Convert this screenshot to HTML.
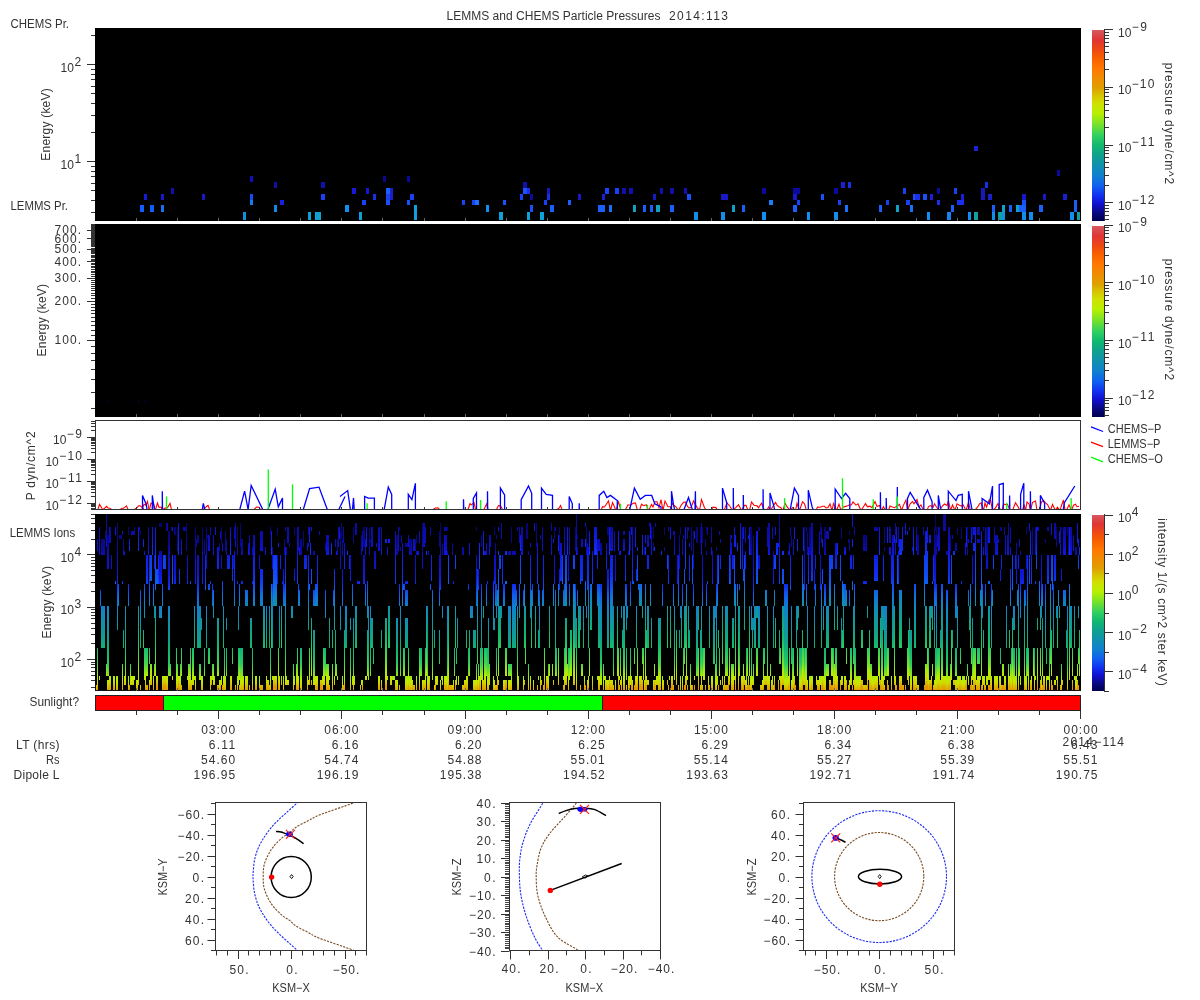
<!DOCTYPE html>
<html><head><meta charset="utf-8"><style>
html,body{margin:0;padding:0;background:#fff;overflow:hidden;}
svg{display:block;will-change:transform;}
text{font-family:"Liberation Sans", sans-serif;}
</style></head><body>
<svg width="1200" height="1000" viewBox="0 0 1200 1000" shape-rendering="crispEdges">
<defs><linearGradient id="cmap" x1="0" y1="0" x2="0" y2="1"><stop offset="0" stop-color="#d55a5f"/><stop offset="0.053" stop-color="#e03535"/><stop offset="0.11" stop-color="#f04c10"/><stop offset="0.147" stop-color="#f86000"/><stop offset="0.2" stop-color="#ff7800"/><stop offset="0.25" stop-color="#f08c00"/><stop offset="0.305" stop-color="#e0a000"/><stop offset="0.34" stop-color="#d8c000"/><stop offset="0.384" stop-color="#d0e000"/><stop offset="0.437" stop-color="#b8f000"/><stop offset="0.5" stop-color="#70e030"/><stop offset="0.553" stop-color="#30d060"/><stop offset="0.605" stop-color="#10b870"/><stop offset="0.658" stop-color="#10a090"/><stop offset="0.71" stop-color="#1090b0"/><stop offset="0.763" stop-color="#1080d0"/><stop offset="0.816" stop-color="#1060f0"/><stop offset="0.868" stop-color="#1030f0"/><stop offset="0.91" stop-color="#1010d0"/><stop offset="0.958" stop-color="#080880"/><stop offset="1.0" stop-color="#000050"/></linearGradient></defs>
<rect width="1200" height="1000" fill="#fff"/>
<rect x="95" y="28" width="986" height="193" fill="#000"/>
<rect x="95" y="224" width="986" height="192.5" fill="#000"/>
<rect x="95" y="513.5" width="986" height="177.5" fill="#000"/>
<rect x="140" y="205" width="4" height="6.5" fill="#1060ff"/>
<rect x="144" y="193.5" width="3" height="6.0" fill="#1818d8"/>
<rect x="150" y="205" width="4" height="6.5" fill="#1060f8"/>
<rect x="161" y="193.5" width="3" height="6.0" fill="#1818d0"/>
<rect x="161" y="205" width="3" height="6.5" fill="#1a70f0"/>
<rect x="171" y="188" width="3" height="5.5" fill="#1010b0"/>
<rect x="202" y="193.5" width="3" height="6.0" fill="#1818c8"/>
<rect x="243" y="211.5" width="3" height="8.0" fill="#1090e0"/>
<rect x="250" y="176" width="3" height="5.5" fill="#1010b8"/>
<rect x="250" y="193.5" width="3" height="6.0" fill="#1050f0"/>
<rect x="250" y="199.5" width="3" height="5.5" fill="#1080f0"/>
<rect x="274" y="182" width="3" height="5.5" fill="#1010a0"/>
<rect x="274" y="205" width="3" height="6.5" fill="#1088e8"/>
<rect x="280" y="199.5" width="4" height="5.5" fill="#1a20e0"/>
<rect x="308" y="211.5" width="3" height="8.0" fill="#10a0d8"/>
<rect x="315" y="211.5" width="6" height="8.0" fill="#10a0d0"/>
<rect x="321" y="182" width="4" height="5.5" fill="#1010b0"/>
<rect x="321" y="193.5" width="4" height="6.0" fill="#1a40f8"/>
<rect x="345" y="205" width="4" height="6.5" fill="#1090f0"/>
<rect x="352" y="188" width="4" height="5.5" fill="#1818d8"/>
<rect x="359" y="211.5" width="3" height="8.0" fill="#10a0d8"/>
<rect x="362" y="199.5" width="4" height="5.5" fill="#1a40f8"/>
<rect x="366" y="188" width="3" height="5.5" fill="#1818d0"/>
<rect x="373" y="193.5" width="3" height="6.0" fill="#1a30e8"/>
<rect x="383" y="176" width="3" height="5.5" fill="#080890"/>
<rect x="386" y="188" width="4" height="5.5" fill="#1a60ff"/>
<rect x="386" y="193.5" width="4" height="6.0" fill="#1a40f0"/>
<rect x="386" y="199.5" width="4" height="5.5" fill="#1a50f8"/>
<rect x="390" y="188" width="3" height="5.5" fill="#1a20c8"/>
<rect x="390" y="193.5" width="3" height="6.0" fill="#1a20c8"/>
<rect x="407" y="176" width="3" height="5.5" fill="#0a0a98"/>
<rect x="407" y="199.5" width="3" height="5.5" fill="#1a50f8"/>
<rect x="410" y="193.5" width="4" height="6.0" fill="#1a40f0"/>
<rect x="414" y="205" width="3" height="6.5" fill="#10a0e0"/>
<rect x="414" y="211.5" width="3" height="8.0" fill="#10a0e0"/>
<rect x="462" y="199.5" width="3" height="5.5" fill="#1a40f8"/>
<rect x="472" y="199.5" width="3" height="5.5" fill="#1a40f8"/>
<rect x="475" y="199.5" width="4" height="5.5" fill="#1a70f8"/>
<rect x="486" y="205" width="3" height="6.5" fill="#1090f0"/>
<rect x="499" y="211.5" width="4" height="8.0" fill="#10a0d8"/>
<rect x="503" y="199.5" width="3" height="5.5" fill="#1a50f8"/>
<rect x="520" y="193.5" width="3" height="6.0" fill="#1a40f0"/>
<rect x="523" y="182" width="4" height="5.5" fill="#1010b0"/>
<rect x="523" y="188" width="4" height="5.5" fill="#1a50ff"/>
<rect x="527" y="188" width="3" height="5.5" fill="#1a30e0"/>
<rect x="530" y="193.5" width="3" height="6.0" fill="#0a0aa0"/>
<rect x="530" y="205" width="3" height="6.5" fill="#1a50f8"/>
<rect x="527" y="211.5" width="3" height="8.0" fill="#10a0d8"/>
<rect x="540" y="211.5" width="4" height="8.0" fill="#10a0d8"/>
<rect x="544" y="199.5" width="3" height="5.5" fill="#1a40f8"/>
<rect x="547" y="188" width="3" height="5.5" fill="#1818c0"/>
<rect x="547" y="193.5" width="3" height="6.0" fill="#1a30e8"/>
<rect x="550" y="205" width="4" height="6.5" fill="#1a60f8"/>
<rect x="568" y="199.5" width="3" height="5.5" fill="#1a60f8"/>
<rect x="578" y="193.5" width="3" height="6.0" fill="#1818c8"/>
<rect x="598" y="205" width="7" height="6.5" fill="#1a60f8"/>
<rect x="602" y="193.5" width="3" height="6.0" fill="#1a20d0"/>
<rect x="605" y="188" width="4" height="5.5" fill="#1a40f8"/>
<rect x="609" y="205" width="3" height="6.5" fill="#1a70f8"/>
<rect x="615" y="188" width="4" height="5.5" fill="#1a40f8"/>
<rect x="622" y="188" width="4" height="5.5" fill="#1010a8"/>
<rect x="629" y="188" width="4" height="5.5" fill="#1010b0"/>
<rect x="633" y="205" width="3" height="6.5" fill="#10a0c0"/>
<rect x="643" y="205" width="3" height="6.5" fill="#1a60f8"/>
<rect x="650" y="205" width="3" height="6.5" fill="#1a60f8"/>
<rect x="653" y="193.5" width="3" height="6.0" fill="#1818c8"/>
<rect x="656" y="205" width="4" height="6.5" fill="#10a0c0"/>
<rect x="660" y="188" width="3" height="5.5" fill="#1010a8"/>
<rect x="670" y="188" width="4" height="5.5" fill="#1010a8"/>
<rect x="670" y="205" width="4" height="6.5" fill="#1a60f8"/>
<rect x="684" y="188" width="3" height="5.5" fill="#1010b0"/>
<rect x="687" y="193.5" width="4" height="6.0" fill="#1a50f8"/>
<rect x="694" y="211.5" width="4" height="8.0" fill="#1090e8"/>
<rect x="721" y="193.5" width="7" height="6.0" fill="#1818c8"/>
<rect x="721" y="211.5" width="4" height="8.0" fill="#1090e8"/>
<rect x="732" y="205" width="3" height="6.5" fill="#10a0c8"/>
<rect x="742" y="205" width="3" height="6.5" fill="#1a60f8"/>
<rect x="762" y="188" width="4" height="5.5" fill="#0a0aa0"/>
<rect x="762" y="211.5" width="4" height="8.0" fill="#1090f0"/>
<rect x="769" y="199.5" width="4" height="5.5" fill="#1a80f8"/>
<rect x="793" y="188" width="7" height="5.5" fill="#0a0aa0"/>
<rect x="793" y="193.5" width="4" height="6.0" fill="#1818c8"/>
<rect x="797" y="199.5" width="3" height="5.5" fill="#1a40f8"/>
<rect x="793" y="205" width="4" height="6.5" fill="#1a60f8"/>
<rect x="807" y="211.5" width="3" height="8.0" fill="#1090f0"/>
<rect x="821" y="193.5" width="3" height="6.0" fill="#1a50f8"/>
<rect x="834" y="188" width="4" height="5.5" fill="#0a0aa0"/>
<rect x="834" y="211.5" width="4" height="8.0" fill="#1090f0"/>
<rect x="838" y="199.5" width="3" height="5.5" fill="#1a40f0"/>
<rect x="841" y="182" width="4" height="5.5" fill="#1a20d8"/>
<rect x="845" y="205" width="3" height="6.5" fill="#1a70f8"/>
<rect x="848" y="182" width="3" height="5.5" fill="#1a30e8"/>
<rect x="879" y="205" width="3" height="6.5" fill="#1a60f8"/>
<rect x="886" y="199.5" width="3" height="5.5" fill="#1a40e8"/>
<rect x="896" y="205" width="3" height="6.5" fill="#10a0c0"/>
<rect x="903" y="188" width="3" height="5.5" fill="#1a40f0"/>
<rect x="906" y="199.5" width="4" height="5.5" fill="#1a40f0"/>
<rect x="910" y="205" width="3" height="6.5" fill="#1a70f8"/>
<rect x="913" y="193.5" width="3" height="6.0" fill="#1a50f8"/>
<rect x="916" y="193.5" width="4" height="6.0" fill="#1a30d8"/>
<rect x="923" y="193.5" width="4" height="6.0" fill="#1a50f8"/>
<rect x="927" y="211.5" width="3" height="8.0" fill="#1090f0"/>
<rect x="930" y="193.5" width="3" height="6.0" fill="#1a20d8"/>
<rect x="937" y="188" width="3" height="5.5" fill="#0a0aa0"/>
<rect x="937" y="199.5" width="3" height="5.5" fill="#1a30e8"/>
<rect x="947" y="211.5" width="4" height="8.0" fill="#1a80f0"/>
<rect x="951" y="205" width="3" height="6.5" fill="#1a60f8"/>
<rect x="954" y="188" width="3" height="5.5" fill="#1a40f0"/>
<rect x="957" y="199.5" width="7" height="5.5" fill="#1a30f0"/>
<rect x="961" y="193.5" width="3" height="6.0" fill="#1a20d8"/>
<rect x="968" y="211.5" width="3" height="8.0" fill="#1090f0"/>
<rect x="974" y="146" width="4" height="5" fill="#1a20d8"/>
<rect x="974" y="211.5" width="4" height="8.0" fill="#10a0a0"/>
<rect x="981" y="188" width="4" height="5.5" fill="#1818b8"/>
<rect x="981" y="193.5" width="4" height="6.0" fill="#1818c0"/>
<rect x="985" y="182" width="3" height="5.5" fill="#1a30e8"/>
<rect x="988" y="193.5" width="4" height="6.0" fill="#1a20c8"/>
<rect x="992" y="205" width="3" height="6.5" fill="#1a60f8"/>
<rect x="992" y="211.5" width="3" height="8.0" fill="#1090e8"/>
<rect x="998" y="211.5" width="4" height="8.0" fill="#10a0a0"/>
<rect x="1002" y="205" width="3" height="6.5" fill="#10a0d0"/>
<rect x="1002" y="211.5" width="3" height="8.0" fill="#1090e0"/>
<rect x="1009" y="205" width="3" height="6.5" fill="#1a60f8"/>
<rect x="1016" y="205" width="3" height="6.5" fill="#10a0c0"/>
<rect x="1019" y="205" width="3" height="6.5" fill="#1a60f8"/>
<rect x="1022" y="193.5" width="4" height="6.0" fill="#1818c8"/>
<rect x="1022" y="199.5" width="4" height="5.5" fill="#1a50f8"/>
<rect x="1022" y="205" width="4" height="6.5" fill="#1a60f8"/>
<rect x="1022" y="211.5" width="4" height="8.0" fill="#1090e8"/>
<rect x="1029" y="211.5" width="4" height="8.0" fill="#1090e8"/>
<rect x="1039" y="205" width="4" height="6.5" fill="#1a60f8"/>
<rect x="1043" y="193.5" width="3" height="6.0" fill="#1818c8"/>
<rect x="1057" y="170" width="3" height="5.5" fill="#0a0aa0"/>
<rect x="1063" y="193.5" width="4" height="6.0" fill="#1a20d0"/>
<rect x="1070" y="211.5" width="4" height="8.0" fill="#1090e8"/>
<rect x="1074" y="199.5" width="3" height="5.5" fill="#1a60f8"/>
<rect x="1074" y="205" width="3" height="6.5" fill="#1a60f8"/>
<rect x="1077" y="211.5" width="3" height="8.0" fill="#10a0a0"/>
<rect x="915" y="193.5" width="5" height="6.0" fill="#1a30e8"/>
<rect x="107" y="400.5" width="1" height="1.2" fill="#101090"/>
<rect x="138" y="400.5" width="1" height="1.2" fill="#101090"/>
<rect x="145" y="400.5" width="1" height="1.2" fill="#101090"/>
<defs><linearGradient id="g4v0" gradientUnits="userSpaceOnUse" x1="0" y1="514" x2="0" y2="690.5"><stop offset="0.000" stop-color="#1010d0"/><stop offset="0.074" stop-color="#1013d3"/><stop offset="0.147" stop-color="#101fdf"/><stop offset="0.210" stop-color="#102eee"/><stop offset="0.261" stop-color="#1040f0"/><stop offset="0.346" stop-color="#104ef0"/><stop offset="0.397" stop-color="#1063ec"/><stop offset="0.459" stop-color="#1082cb"/><stop offset="0.521" stop-color="#1093a9"/><stop offset="0.589" stop-color="#10a18e"/><stop offset="0.657" stop-color="#10b179"/><stop offset="0.714" stop-color="#19be6b"/><stop offset="0.759" stop-color="#2ecf60"/><stop offset="0.805" stop-color="#51d846"/><stop offset="0.850" stop-color="#75e12c"/><stop offset="0.884" stop-color="#a9ec09"/><stop offset="0.918" stop-color="#c6e600"/><stop offset="0.941" stop-color="#d3d200"/><stop offset="0.958" stop-color="#d9bb00"/><stop offset="0.975" stop-color="#e29c00"/><stop offset="1.000" stop-color="#f18a00"/></linearGradient><clipPath id="c4v0"><path d="M115 527h1V535h-1zM115 581h1V584h-1zM129 539h1V551h-1zM129 685h1V690.5h-1zM138 527h1V551h-1zM138 606h1V685h-1zM143 539h1V547h-1zM143 630h1V648h-1zM150 555h2V581h-2zM150 664h2V685h-2zM152 527h1V555h-1zM155 527h1V590h-1zM155 606h1V676h-1zM156 569h2V584h-2zM156 676h2V690.5h-2zM163 555h3V569h-3zM163 676h3V690.5h-3zM172 527h1V531h-1zM172 555h1V584h-1zM172 676h1V680h-1zM178 523h1V555h-1zM178 676h1V690.5h-1zM211 676h1V685h-1zM215 527h1V535h-1zM230 527h1V555h-1zM230 676h1V690.5h-1zM271 531h1V555h-1zM271 584h1V648h-1zM273 555h4V606h-4zM273 676h4V690.5h-4zM278 543h1V547h-1zM278 648h1V690.5h-1zM281 606h1V648h-1zM281 676h1V685h-1zM309 527h1V543h-1zM309 584h1V590h-1zM309 648h1V685h-1zM310 543h1V555h-1zM311 527h1V531h-1zM311 569h1V584h-1zM311 618h1V676h-1zM311 680h1V685h-1zM320 680h2V690.5h-2zM331 543h1V555h-1zM339 527h1V539h-1zM347 551h1V555h-1zM366 527h1V547h-1zM366 676h1V680h-1zM385 539h2V543h-2zM385 618h2V690.5h-2zM388 539h2V543h-2zM388 606h2V648h-2zM426 551h1V555h-1zM426 606h1V676h-1zM429 676h1V690.5h-1zM448 555h1V584h-1zM448 606h1V690.5h-1zM455 555h1V569h-1zM455 606h1V648h-1zM455 680h1V690.5h-1zM479 543h1V569h-1zM479 676h1V690.5h-1zM483 531h1V555h-1zM483 606h1V618h-1zM483 680h1V690.5h-1zM497 590h1V606h-1zM497 676h1V690.5h-1zM498 527h1V531h-1zM498 551h1V555h-1zM498 569h1V676h-1zM498 680h1V685h-1zM499 555h2V569h-2zM499 606h2V648h-2zM505 551h2V555h-2zM505 581h2V584h-2zM505 648h2V676h-2zM505 680h2V690.5h-2zM520 535h1V551h-1zM520 555h1V584h-1zM524 584h1V648h-1zM524 680h1V685h-1zM525 606h1V664h-1zM531 590h1V648h-1zM534 523h1V531h-1zM535 606h1V648h-1zM541 680h1V685h-1zM544 648h1V690.5h-1zM546 676h2V690.5h-2zM549 606h1V648h-1zM549 664h1V676h-1zM552 664h1V676h-1zM553 539h1V543h-1zM553 584h1V606h-1zM553 680h1V685h-1zM558 535h1V551h-1zM558 584h1V606h-1zM558 648h1V685h-1zM562 555h1V584h-1zM565 555h2V606h-2zM565 618h2V685h-2zM567 527h1V555h-1zM567 664h1V676h-1zM570 630h2V676h-2zM573 555h2V569h-2zM573 584h2V685h-2zM578 606h2V648h-2zM585 523h1V527h-1zM585 539h1V547h-1zM585 581h1V606h-1zM585 685h1V690.5h-1zM589 531h1V555h-1zM589 648h1V676h-1zM590 584h2V630h-2zM594 527h3V555h-3zM609 527h1V555h-1zM609 676h1V690.5h-1zM617 606h1V676h-1zM618 531h1V551h-1zM618 648h1V690.5h-1zM629 531h1V555h-1zM629 676h1V690.5h-1zM631 527h1V535h-1zM631 676h1V690.5h-1zM633 581h1V584h-1zM634 648h1V664h-1zM634 685h1V690.5h-1zM635 527h1V547h-1zM635 676h1V690.5h-1zM637 547h1V551h-1zM637 555h1V581h-1zM637 648h1V690.5h-1zM638 584h1V590h-1zM639 584h3V606h-3zM639 676h3V690.5h-3zM642 535h1V555h-1zM642 606h1V618h-1zM642 648h1V664h-1zM642 680h1V690.5h-1zM643 648h1V680h-1zM645 535h1V543h-1zM645 547h1V555h-1zM645 584h1V690.5h-1zM646 630h1V648h-1zM646 676h1V690.5h-1zM650 523h1V539h-1zM650 584h1V606h-1zM654 547h1V551h-1zM654 664h1V676h-1zM654 680h1V690.5h-1zM661 551h1V555h-1zM667 555h1V569h-1zM667 606h1V648h-1zM667 680h1V685h-1zM670 527h1V539h-1zM670 606h1V648h-1zM671 676h2V690.5h-2zM676 630h1V685h-1zM684 569h1V584h-1zM684 606h1V664h-1zM684 685h1V690.5h-1zM685 527h1V569h-1zM685 606h1V648h-1zM685 676h1V690.5h-1zM686 584h1V685h-1zM692 555h1V584h-1zM692 685h1V690.5h-1zM694 531h1V539h-1zM694 676h1V680h-1zM694 685h1V690.5h-1zM698 606h1V630h-1zM698 648h1V690.5h-1zM703 648h2V680h-2zM718 555h1V584h-1zM718 630h1V648h-1zM718 685h1V690.5h-1zM722 606h1V664h-1zM722 676h1V685h-1zM728 676h1V690.5h-1zM729 555h1V584h-1zM729 648h1V685h-1zM734 527h1V547h-1zM734 555h1V606h-1zM734 676h1V680h-1zM735 535h1V547h-1zM735 584h1V690.5h-1zM737 543h1V551h-1zM737 584h1V606h-1zM738 606h1V690.5h-1zM740 523h1V569h-1zM741 676h1V690.5h-1zM743 527h1V539h-1zM743 569h1V581h-1zM743 664h1V690.5h-1zM744 555h1V630h-1zM744 676h1V685h-1zM747 648h1V676h-1zM747 685h1V690.5h-1zM748 535h1V539h-1zM748 676h1V690.5h-1zM749 527h1V555h-1zM749 606h1V676h-1zM749 685h1V690.5h-1zM756 531h2V584h-2zM756 606h2V618h-2zM756 648h2V676h-2zM765 590h2V606h-2zM765 676h2V685h-2zM774 555h1V569h-1zM774 590h1V606h-1zM774 676h1V690.5h-1zM775 527h1V535h-1zM775 555h1V569h-1zM775 618h1V648h-1zM776 543h2V555h-2zM778 543h1V547h-1zM778 680h1V690.5h-1zM780 648h1V664h-1zM780 676h1V690.5h-1zM782 551h2V555h-2zM782 569h2V584h-2zM782 606h2V685h-2zM794 527h1V539h-1zM794 676h1V690.5h-1zM795 685h1V690.5h-1zM797 539h1V551h-1zM797 606h1V630h-1zM797 648h1V676h-1zM798 606h1V618h-1zM802 555h1V606h-1zM802 630h1V690.5h-1zM803 527h1V551h-1zM803 584h1V606h-1zM803 648h1V685h-1zM805 648h1V690.5h-1zM822 539h1V547h-1zM822 569h1V584h-1zM822 676h1V690.5h-1zM829 527h2V531h-2zM829 555h2V606h-2zM829 680h2V690.5h-2zM831 555h2V569h-2zM831 648h2V676h-2zM831 685h2V690.5h-2zM834 584h1V630h-1zM834 664h1V690.5h-1zM837 543h1V555h-1zM837 606h1V630h-1zM837 676h1V690.5h-1zM840 555h1V581h-1zM840 680h1V690.5h-1zM842 581h1V606h-1zM842 630h1V648h-1zM842 676h1V685h-1zM843 584h1V648h-1zM846 590h1V606h-1zM846 648h1V664h-1zM846 680h1V690.5h-1zM852 514h1V527h-1zM852 539h1V547h-1zM852 581h1V590h-1zM852 685h1V690.5h-1zM861 630h2V648h-2zM861 680h2V690.5h-2zM867 606h1V618h-1zM867 648h1V690.5h-1zM868 648h1V680h-1zM869 630h1V690.5h-1zM878 648h1V676h-1zM879 527h1V555h-1zM879 648h1V685h-1zM880 618h1V648h-1zM880 680h1V690.5h-1zM887 527h1V543h-1zM887 648h1V676h-1zM887 680h1V690.5h-1zM888 648h1V676h-1zM888 685h1V690.5h-1zM894 535h1V543h-1zM894 606h1V685h-1zM896 527h1V543h-1zM896 685h1V690.5h-1zM897 555h1V584h-1zM899 539h3V555h-3zM899 590h3V648h-3zM899 676h3V690.5h-3zM902 527h1V551h-1zM902 685h1V690.5h-1zM905 523h1V535h-1zM905 685h1V690.5h-1zM907 531h1V535h-1zM907 648h1V680h-1zM908 630h1V685h-1zM913 527h1V555h-1zM913 676h1V690.5h-1zM924 555h1V606h-1zM924 685h1V690.5h-1zM925 531h2V584h-2zM925 606h2V648h-2zM925 664h2V690.5h-2zM927 527h1V543h-1zM927 551h1V584h-1zM927 648h1V690.5h-1zM929 535h2V543h-2zM929 606h2V648h-2zM929 680h2V690.5h-2zM931 606h1V618h-1zM931 676h1V690.5h-1zM932 581h1V584h-1zM932 606h1V630h-1zM932 664h1V676h-1zM951 555h1V584h-1zM951 630h1V680h-1zM953 551h2V555h-2zM953 680h2V685h-2zM966 527h1V547h-1zM966 676h1V690.5h-1zM969 606h1V630h-1zM970 584h1V648h-1zM970 685h1V690.5h-1zM971 527h1V543h-1zM971 648h1V664h-1zM971 676h1V690.5h-1zM973 527h2V535h-2zM973 543h2V551h-2zM973 648h2V690.5h-2zM975 527h1V606h-1zM975 648h1V685h-1zM980 590h1V606h-1zM980 676h1V680h-1zM981 531h1V676h-1zM981 685h1V690.5h-1zM988 527h2V543h-2zM988 581h2V584h-2zM988 606h2V680h-2zM988 685h2V690.5h-2zM990 648h1V690.5h-1zM992 590h1V606h-1zM993 555h1V569h-1zM999 676h1V690.5h-1zM1002 664h2V676h-2zM1002 685h2V690.5h-2zM1009 630h1V648h-1zM1009 676h1V690.5h-1zM1012 555h1V590h-1zM1012 618h1V690.5h-1zM1017 590h1V606h-1zM1029 523h1V531h-1zM1029 555h1V584h-1zM1030 531h1V555h-1zM1030 680h1V690.5h-1zM1033 648h1V676h-1zM1036 527h1V569h-1zM1037 527h1V531h-1zM1037 618h1V630h-1zM1037 648h1V690.5h-1zM1039 581h1V606h-1zM1040 606h1V630h-1zM1040 648h1V676h-1zM1040 680h1V690.5h-1zM1043 676h2V690.5h-2zM1050 584h1V664h-1zM1051 523h1V535h-1zM1051 555h1V581h-1zM1051 630h1V676h-1zM1051 680h1V690.5h-1zM1052 555h1V590h-1zM1052 685h1V690.5h-1zM1057 606h1V648h-1zM1057 676h1V690.5h-1zM1058 590h1V606h-1zM1059 531h1V543h-1zM1059 606h1V618h-1zM1062 680h1V685h-1zM1069 527h1V555h-1zM1069 584h1V680h-1zM1072 648h1V676h-1zM1072 680h1V690.5h-1zM1077 523h1V543h-1zM1077 664h1V676h-1zM1077 680h1V690.5h-1zM1078 539h1V547h-1zM1078 555h1V569h-1zM1078 606h1V618h-1zM1078 648h1V664h-1zM1078 685h1V690.5h-1zM1079 547h1V555h-1zM1079 630h1V676h-1z"/></clipPath><linearGradient id="g4v1" gradientUnits="userSpaceOnUse" x1="0" y1="514" x2="0" y2="690.5"><stop offset="0.000" stop-color="#0a0a95"/><stop offset="0.074" stop-color="#0b0b9e"/><stop offset="0.147" stop-color="#0d0db6"/><stop offset="0.210" stop-color="#1013d3"/><stop offset="0.261" stop-color="#1023e3"/><stop offset="0.346" stop-color="#102eee"/><stop offset="0.397" stop-color="#1045f0"/><stop offset="0.459" stop-color="#106fe0"/><stop offset="0.521" stop-color="#1088bf"/><stop offset="0.589" stop-color="#1096a3"/><stop offset="0.657" stop-color="#10a18e"/><stop offset="0.714" stop-color="#10ae7c"/><stop offset="0.759" stop-color="#19be6b"/><stop offset="0.805" stop-color="#2bcc62"/><stop offset="0.850" stop-color="#4bd64b"/><stop offset="0.884" stop-color="#81e324"/><stop offset="0.918" stop-color="#b4ef02"/><stop offset="0.941" stop-color="#c8e400"/><stop offset="0.958" stop-color="#d2d500"/><stop offset="0.975" stop-color="#dab600"/><stop offset="1.000" stop-color="#e79600"/></linearGradient><clipPath id="c4v1"><path d="M97 539h1V551h-1zM97 648h1V690.5h-1zM99 527h1V555h-1zM99 676h1V680h-1zM106 514h1V547h-1zM106 664h1V676h-1zM109 527h2V543h-2zM109 676h2V690.5h-2zM113 676h2V690.5h-2zM118 584h1V606h-1zM122 531h1V535h-1zM122 581h1V584h-1zM122 664h1V690.5h-1zM124 551h1V555h-1zM124 676h1V685h-1zM125 606h1V685h-1zM131 531h3V535h-3zM131 676h3V685h-3zM134 527h1V535h-1zM134 676h1V680h-1zM139 527h1V531h-1zM144 551h1V555h-1zM144 584h1V618h-1zM144 648h1V680h-1zM145 648h1V690.5h-1zM146 555h2V584h-2zM146 648h2V676h-2zM146 685h2V690.5h-2zM148 527h1V555h-1zM149 555h1V606h-1zM149 648h1V664h-1zM149 680h1V690.5h-1zM153 584h1V606h-1zM153 676h1V690.5h-1zM154 555h1V569h-1zM154 606h1V618h-1zM154 664h1V676h-1zM158 555h1V584h-1zM162 584h1V606h-1zM162 676h1V690.5h-1zM166 523h2V531h-2zM166 676h2V690.5h-2zM176 648h1V690.5h-1zM179 569h1V584h-1zM179 676h1V690.5h-1zM181 539h1V555h-1zM181 648h1V676h-1zM181 685h1V690.5h-1zM183 527h3V531h-3zM188 664h2V690.5h-2zM190 581h1V584h-1zM190 648h1V690.5h-1zM191 680h1V690.5h-1zM192 648h2V685h-2zM194 606h1V648h-1zM194 676h1V680h-1zM201 618h1V630h-1zM201 676h1V690.5h-1zM205 555h1V590h-1zM208 535h2V551h-2zM208 584h2V590h-2zM208 648h2V664h-2zM210 527h1V535h-1zM210 581h1V584h-1zM210 676h1V690.5h-1zM213 535h1V555h-1zM213 590h1V618h-1zM213 664h1V685h-1zM214 676h1V685h-1zM217 547h2V569h-2zM217 618h2V676h-2zM217 685h2V690.5h-2zM220 531h1V539h-1zM220 680h1V690.5h-1zM222 543h1V551h-1zM222 581h1V606h-1zM222 685h1V690.5h-1zM223 606h1V648h-1zM223 676h1V690.5h-1zM227 555h3V569h-3zM231 676h1V690.5h-1zM232 555h1V581h-1zM232 648h1V664h-1zM234 527h1V539h-1zM234 551h1V606h-1zM235 523h1V547h-1zM235 685h1V690.5h-1zM239 584h1V606h-1zM239 648h1V680h-1zM239 685h1V690.5h-1zM243 676h1V690.5h-1zM245 590h3V606h-3zM245 676h3V690.5h-3zM248 543h1V555h-1zM249 535h1V555h-1zM249 685h1V690.5h-1zM250 618h2V648h-2zM253 535h2V606h-2zM255 676h2V690.5h-2zM260 531h3V551h-3zM260 569h3V606h-3zM260 685h3V690.5h-3zM263 606h2V648h-2zM265 547h1V555h-1zM266 606h1V648h-1zM266 676h1V690.5h-1zM267 680h2V690.5h-2zM280 555h1V569h-1zM285 527h1V531h-1zM285 547h1V685h-1zM287 527h2V543h-2zM287 680h2V685h-2zM291 606h2V618h-2zM296 664h1V690.5h-1zM297 527h1V584h-1zM297 648h1V690.5h-1zM298 527h1V551h-1zM298 584h1V606h-1zM298 676h1V690.5h-1zM299 547h1V555h-1zM299 590h1V606h-1zM304 555h3V569h-3zM307 543h1V551h-1zM307 676h1V690.5h-1zM308 527h1V535h-1zM308 543h1V547h-1zM308 555h1V630h-1zM308 680h1V685h-1zM315 584h2V606h-2zM315 676h2V690.5h-2zM317 555h1V606h-1zM317 676h1V690.5h-1zM319 531h1V535h-1zM322 676h1V690.5h-1zM323 648h2V685h-2zM326 535h3V555h-3zM326 664h3V690.5h-3zM329 618h1V648h-1zM329 676h1V680h-1zM329 685h1V690.5h-1zM332 630h1V648h-1zM332 664h1V690.5h-1zM334 569h1V630h-1zM334 676h1V685h-1zM335 539h1V547h-1zM335 630h1V676h-1zM336 551h1V555h-1zM336 664h1V676h-1zM338 527h1V547h-1zM343 527h1V543h-1zM343 685h1V690.5h-1zM344 543h1V569h-1zM344 630h1V690.5h-1zM349 555h1V569h-1zM352 584h1V606h-1zM352 676h1V685h-1zM354 676h1V685h-1zM355 523h2V535h-2zM355 606h2V648h-2zM362 531h1V551h-1zM362 680h1V690.5h-1zM365 539h1V555h-1zM365 584h1V606h-1zM365 676h1V680h-1zM367 581h1V618h-1zM367 630h1V676h-1zM371 527h2V547h-2zM371 618h2V648h-2zM376 543h1V547h-1zM378 527h2V551h-2zM378 676h2V690.5h-2zM381 527h1V555h-1zM381 630h1V648h-1zM381 680h1V690.5h-1zM387 547h1V555h-1zM387 676h1V680h-1zM390 676h2V685h-2zM395 531h1V584h-1zM395 680h1V690.5h-1zM398 527h1V551h-1zM401 535h1V543h-1zM402 543h1V606h-1zM403 584h2V590h-2zM403 648h2V676h-2zM408 535h1V547h-1zM408 648h1V690.5h-1zM412 680h1V690.5h-1zM413 539h2V551h-2zM413 685h2V690.5h-2zM417 551h2V555h-2zM419 531h1V543h-1zM419 648h1V690.5h-1zM423 523h2V547h-2zM423 680h2V690.5h-2zM425 527h1V543h-1zM425 648h1V690.5h-1zM430 527h1V535h-1zM430 584h1V590h-1zM431 555h1V581h-1zM432 590h1V680h-1zM435 676h1V690.5h-1zM436 676h2V685h-2zM441 676h1V680h-1zM444 527h3V531h-3zM444 535h3V555h-3zM444 676h3V690.5h-3zM449 685h3V690.5h-3zM458 676h1V685h-1zM464 680h2V690.5h-2zM466 630h1V648h-1zM466 676h1V690.5h-1zM467 676h1V690.5h-1zM469 543h1V555h-1zM469 630h1V676h-1zM477 569h1V664h-1zM477 680h1V690.5h-1zM480 648h1V690.5h-1zM482 648h1V690.5h-1zM484 551h2V555h-2zM484 648h2V690.5h-2zM486 543h1V555h-1zM486 584h1V606h-1zM486 648h1V676h-1zM489 535h1V555h-1zM489 664h1V685h-1zM490 535h1V547h-1zM501 523h1V539h-1zM501 606h1V618h-1zM502 555h1V584h-1zM517 527h1V531h-1zM517 606h1V690.5h-1zM519 527h1V543h-1zM519 584h1V618h-1zM521 527h2V555h-2zM530 543h1V547h-1zM530 555h1V618h-1zM530 676h1V690.5h-1zM532 584h1V606h-1zM537 543h1V584h-1zM537 685h1V690.5h-1zM538 584h1V606h-1zM538 630h1V648h-1zM538 676h1V680h-1zM540 535h1V539h-1zM540 676h1V690.5h-1zM542 527h1V551h-1zM542 590h1V606h-1zM543 555h1V606h-1zM543 685h1V690.5h-1zM551 523h1V531h-1zM551 535h1V555h-1zM555 527h1V531h-1zM555 590h1V676h-1zM560 543h2V581h-2zM563 590h1V606h-1zM563 676h1V680h-1zM563 685h1V690.5h-1zM564 527h1V555h-1zM564 584h1V606h-1zM564 648h1V690.5h-1zM569 527h1V555h-1zM569 584h1V606h-1zM569 648h1V680h-1zM576 514h1V555h-1zM576 618h1V690.5h-1zM580 555h1V584h-1zM580 606h1V630h-1zM580 685h1V690.5h-1zM581 539h2V547h-2zM581 555h2V581h-2zM581 664h2V676h-2zM583 606h1V648h-1zM584 676h1V690.5h-1zM587 543h1V590h-1zM587 680h1V690.5h-1zM588 547h1V648h-1zM588 676h1V690.5h-1zM592 551h1V584h-1zM592 676h1V690.5h-1zM597 539h1V569h-1zM597 584h1V606h-1zM597 676h1V680h-1zM598 539h2V551h-2zM598 584h2V648h-2zM598 676h2V690.5h-2zM604 676h1V680h-1zM606 543h1V569h-1zM606 680h1V690.5h-1zM610 527h3V551h-3zM610 555h3V648h-3zM610 680h3V690.5h-3zM614 531h1V551h-1zM619 551h1V555h-1zM619 676h1V680h-1zM619 685h1V690.5h-1zM620 551h1V555h-1zM620 648h1V676h-1zM620 680h1V685h-1zM621 606h1V618h-1zM621 676h1V690.5h-1zM622 630h1V648h-1zM623 531h2V535h-2zM623 539h2V551h-2zM623 606h2V690.5h-2zM625 555h1V581h-1zM625 584h1V606h-1zM627 606h1V618h-1zM632 527h1V584h-1zM632 680h1V690.5h-1zM636 569h1V581h-1zM636 606h1V648h-1zM636 676h1V690.5h-1zM647 535h2V547h-2zM647 555h2V569h-2zM647 606h2V648h-2zM647 680h2V685h-2zM649 523h1V527h-1zM651 527h1V555h-1zM651 618h1V648h-1zM655 523h1V527h-1zM655 680h1V690.5h-1zM656 676h2V685h-2zM658 618h3V690.5h-3zM668 527h1V531h-1zM668 555h1V584h-1zM668 685h1V690.5h-1zM669 676h1V680h-1zM673 531h1V535h-1zM673 584h1V606h-1zM673 685h1V690.5h-1zM674 531h1V555h-1zM674 606h1V680h-1zM678 555h1V606h-1zM678 685h1V690.5h-1zM681 606h1V648h-1zM683 535h1V539h-1zM683 648h1V676h-1zM687 527h1V539h-1zM687 676h1V680h-1zM687 685h1V690.5h-1zM688 527h1V531h-1zM688 606h1V648h-1zM689 543h1V547h-1zM689 555h1V581h-1zM689 630h1V648h-1zM701 523h1V555h-1zM701 606h1V690.5h-1zM707 527h1V535h-1zM707 581h1V584h-1zM708 676h1V690.5h-1zM709 606h1V648h-1zM709 685h1V690.5h-1zM711 527h1V543h-1zM711 547h1V555h-1zM711 676h1V690.5h-1zM717 555h1V606h-1zM717 676h1V685h-1zM719 531h1V535h-1zM719 648h1V676h-1zM720 539h1V543h-1zM720 555h1V569h-1zM720 680h1V685h-1zM724 676h1V690.5h-1zM725 606h3V676h-3zM725 685h3V690.5h-3zM730 535h1V584h-1zM731 535h1V539h-1zM731 543h1V555h-1zM731 664h1V690.5h-1zM732 555h2V569h-2zM732 618h2V648h-2zM732 664h2V690.5h-2zM739 584h1V590h-1zM739 606h1V676h-1zM742 527h1V569h-1zM742 676h1V690.5h-1zM745 527h1V543h-1zM745 551h1V569h-1zM745 680h1V690.5h-1zM755 606h1V648h-1zM763 648h1V690.5h-1zM764 648h1V664h-1zM764 676h1V685h-1zM767 527h1V547h-1zM767 606h1V690.5h-1zM768 523h2V555h-2zM768 676h2V690.5h-2zM770 664h1V676h-1zM772 527h1V539h-1zM772 676h1V690.5h-1zM779 514h1V584h-1zM779 630h1V664h-1zM779 676h1V680h-1zM781 676h1V690.5h-1zM788 551h1V555h-1zM788 676h1V690.5h-1zM789 543h1V555h-1zM789 648h1V690.5h-1zM790 527h1V535h-1zM790 555h1V590h-1zM793 539h1V555h-1zM793 648h1V690.5h-1zM806 527h1V531h-1zM806 584h1V606h-1zM806 648h1V690.5h-1zM808 547h1V584h-1zM811 523h2V581h-2zM811 676h2V690.5h-2zM815 555h1V569h-1zM815 584h1V606h-1zM816 676h1V685h-1zM817 680h2V690.5h-2zM819 531h1V555h-1zM819 676h1V690.5h-1zM821 527h1V543h-1zM821 584h1V648h-1zM821 676h1V690.5h-1zM823 606h1V630h-1zM823 676h1V690.5h-1zM826 531h3V539h-3zM826 606h3V648h-3zM826 664h3V676h-3zM833 648h1V690.5h-1zM835 543h2V569h-2zM835 648h2V690.5h-2zM844 547h2V555h-2zM844 584h2V606h-2zM844 676h2V690.5h-2zM850 555h2V569h-2zM850 648h2V685h-2zM853 555h1V569h-1zM853 606h1V664h-1zM853 680h1V685h-1zM854 527h1V535h-1zM854 584h1V690.5h-1zM860 676h1V690.5h-1zM870 664h2V690.5h-2zM874 527h4V531h-4zM874 555h4V581h-4zM874 590h4V648h-4zM874 676h4V690.5h-4zM881 606h2V690.5h-2zM883 555h1V581h-1zM883 606h1V630h-1zM883 676h1V690.5h-1zM889 527h2V543h-2zM889 547h2V555h-2zM891 555h1V584h-1zM891 676h1V690.5h-1zM892 535h2V648h-2zM895 523h1V535h-1zM895 539h1V555h-1zM895 676h1V690.5h-1zM898 527h1V547h-1zM898 551h1V584h-1zM903 685h1V690.5h-1zM909 527h1V531h-1zM909 618h1V676h-1zM912 547h1V551h-1zM914 584h2V648h-2zM914 676h2V690.5h-2zM916 527h1V551h-1zM916 676h1V690.5h-1zM923 527h1V535h-1zM928 648h1V690.5h-1zM933 555h1V581h-1zM933 685h1V690.5h-1zM937 535h1V547h-1zM937 648h1V690.5h-1zM938 527h2V551h-2zM938 648h2V690.5h-2zM941 584h2V690.5h-2zM943 514h3V531h-3zM943 676h3V690.5h-3zM948 527h2V584h-2zM948 676h2V690.5h-2zM952 535h1V539h-1zM952 630h1V648h-1zM959 676h1V690.5h-1zM960 648h1V664h-1zM960 676h1V690.5h-1zM965 543h1V555h-1zM965 680h1V690.5h-1zM968 539h1V543h-1zM968 590h1V606h-1zM968 676h1V685h-1zM976 680h1V690.5h-1zM977 527h3V535h-3zM977 539h3V543h-3zM977 648h3V664h-3zM977 676h3V690.5h-3zM982 584h1V618h-1zM982 676h1V690.5h-1zM983 527h1V531h-1zM983 547h1V555h-1zM983 630h1V648h-1zM983 676h1V685h-1zM984 676h1V690.5h-1zM985 527h1V555h-1zM985 584h1V606h-1zM985 685h1V690.5h-1zM994 527h1V543h-1zM994 676h1V690.5h-1zM995 535h3V555h-3zM995 676h3V690.5h-3zM998 539h1V543h-1zM1001 527h1V531h-1zM1001 555h1V569h-1zM1001 685h1V690.5h-1zM1004 527h1V535h-1zM1004 676h1V690.5h-1zM1005 535h1V555h-1zM1005 676h1V690.5h-1zM1007 535h1V555h-1zM1008 523h1V555h-1zM1008 664h1V690.5h-1zM1010 527h1V543h-1zM1010 547h1V555h-1zM1010 569h1V606h-1zM1010 664h1V690.5h-1zM1015 555h1V569h-1zM1015 676h1V690.5h-1zM1018 555h1V569h-1zM1018 584h1V690.5h-1zM1019 539h1V547h-1zM1019 648h1V676h-1zM1024 590h1V690.5h-1zM1027 555h1V676h-1zM1028 648h1V690.5h-1zM1031 555h1V584h-1zM1031 676h1V690.5h-1zM1035 527h1V555h-1zM1035 581h1V584h-1zM1035 676h1V680h-1zM1038 527h1V531h-1zM1042 584h1V606h-1zM1042 618h1V676h-1zM1042 685h1V690.5h-1zM1047 527h2V531h-2zM1047 555h2V584h-2zM1047 676h2V680h-2zM1054 523h2V539h-2zM1054 555h2V581h-2zM1054 680h2V685h-2zM1060 527h1V555h-1zM1060 685h1V690.5h-1zM1063 527h3V555h-3zM1063 590h3V606h-3zM1066 630h1V648h-1zM1070 527h2V555h-2zM1070 606h2V648h-2zM1073 535h1V551h-1zM1074 606h1V648h-1zM1074 676h1V680h-1z"/></clipPath><linearGradient id="g4v2" gradientUnits="userSpaceOnUse" x1="0" y1="514" x2="0" y2="690.5"><stop offset="0.000" stop-color="#04046c"/><stop offset="0.074" stop-color="#050572"/><stop offset="0.147" stop-color="#080884"/><stop offset="0.210" stop-color="#0b0ba6"/><stop offset="0.261" stop-color="#0f0fc7"/><stop offset="0.346" stop-color="#1017d7"/><stop offset="0.397" stop-color="#102aea"/><stop offset="0.459" stop-color="#105cef"/><stop offset="0.521" stop-color="#107ed1"/><stop offset="0.589" stop-color="#108cb6"/><stop offset="0.657" stop-color="#1097a0"/><stop offset="0.714" stop-color="#10a18e"/><stop offset="0.759" stop-color="#10b179"/><stop offset="0.805" stop-color="#19be6b"/><stop offset="0.850" stop-color="#2bcc62"/><stop offset="0.884" stop-color="#5ddb3d"/><stop offset="0.918" stop-color="#92e719"/><stop offset="0.941" stop-color="#bbed00"/><stop offset="0.958" stop-color="#c8e400"/><stop offset="0.975" stop-color="#d4ce00"/><stop offset="1.000" stop-color="#dea400"/></linearGradient><clipPath id="c4v2"><path d="M96 685h1V690.5h-1zM100 590h1V606h-1zM101 539h4V555h-4zM101 606h4V648h-4zM105 531h1V539h-1zM107 535h2V569h-2zM107 606h2V676h-2zM107 680h2V690.5h-2zM111 555h1V569h-1zM116 676h1V690.5h-1zM117 523h1V630h-1zM117 676h1V690.5h-1zM119 535h3V539h-3zM123 539h1V555h-1zM123 630h1V648h-1zM128 527h1V535h-1zM128 584h1V606h-1zM128 676h1V690.5h-1zM130 664h1V685h-1zM136 680h2V690.5h-2zM140 531h1V535h-1zM140 590h1V648h-1zM140 685h1V690.5h-1zM159 523h3V527h-3zM159 551h3V584h-3zM159 606h3V618h-3zM168 531h2V590h-2zM168 606h2V676h-2zM170 664h1V676h-1zM171 527h1V531h-1zM174 527h2V535h-2zM174 555h2V584h-2zM177 527h1V551h-1zM177 664h1V690.5h-1zM180 664h1V690.5h-1zM186 523h1V551h-1zM187 555h1V584h-1zM187 676h1V680h-1zM195 527h1V584h-1zM195 676h1V690.5h-1zM196 539h1V547h-1zM197 535h2V543h-2zM197 555h2V648h-2zM199 606h2V648h-2zM199 664h2V680h-2zM202 527h1V584h-1zM202 676h1V690.5h-1zM204 539h1V555h-1zM204 648h1V676h-1zM206 527h1V569h-1zM206 606h1V648h-1zM207 535h1V539h-1zM212 584h1V606h-1zM212 664h1V680h-1zM219 543h1V551h-1zM219 680h1V690.5h-1zM221 527h1V543h-1zM221 555h1V569h-1zM221 676h1V685h-1zM224 648h1V690.5h-1zM225 531h1V551h-1zM225 676h1V690.5h-1zM226 539h1V555h-1zM226 618h1V630h-1zM226 648h1V676h-1zM233 555h1V569h-1zM237 527h1V555h-1zM237 581h1V584h-1zM237 676h1V690.5h-1zM238 606h1V630h-1zM238 648h1V685h-1zM240 523h1V547h-1zM240 648h1V690.5h-1zM241 539h2V555h-2zM241 581h2V584h-2zM241 648h2V690.5h-2zM252 547h1V555h-1zM252 581h1V584h-1zM252 648h1V690.5h-1zM259 555h1V569h-1zM259 676h1V690.5h-1zM269 606h1V648h-1zM269 685h1V690.5h-1zM270 527h1V535h-1zM270 648h1V690.5h-1zM272 547h1V569h-1zM272 584h1V648h-1zM272 676h1V680h-1zM277 527h1V535h-1zM277 555h1V584h-1zM279 606h1V648h-1zM279 676h1V690.5h-1zM282 581h1V584h-1zM283 569h1V606h-1zM283 676h1V690.5h-1zM284 539h1V555h-1zM284 584h1V606h-1zM286 547h1V555h-1zM286 676h1V685h-1zM289 543h1V547h-1zM293 664h1V690.5h-1zM294 527h1V535h-1zM294 569h1V581h-1zM294 676h1V685h-1zM300 539h2V555h-2zM300 648h2V690.5h-2zM303 531h1V547h-1zM313 551h2V555h-2zM313 590h2V606h-2zM313 630h2V685h-2zM325 543h1V551h-1zM325 590h1V618h-1zM325 648h1V676h-1zM333 590h1V606h-1zM337 539h1V555h-1zM337 676h1V680h-1zM340 531h1V569h-1zM340 606h1V630h-1zM341 523h1V539h-1zM342 539h1V555h-1zM342 569h1V606h-1zM342 676h1V690.5h-1zM345 606h2V648h-2zM350 555h1V581h-1zM350 618h1V630h-1zM350 648h1V690.5h-1zM353 527h1V543h-1zM353 618h1V690.5h-1zM357 581h3V584h-3zM360 685h1V690.5h-1zM361 535h1V555h-1zM361 680h1V685h-1zM363 527h2V547h-2zM363 555h2V584h-2zM368 606h1V680h-1zM369 527h1V555h-1zM370 539h1V543h-1zM370 606h1V676h-1zM373 648h1V664h-1zM374 551h2V569h-2zM392 676h3V680h-3zM396 535h2V555h-2zM396 618h2V676h-2zM396 680h2V690.5h-2zM399 527h1V531h-1zM399 584h1V606h-1zM399 685h1V690.5h-1zM400 547h1V551h-1zM400 606h1V676h-1zM405 543h3V547h-3zM405 581h3V584h-3zM405 590h3V606h-3zM405 618h3V648h-3zM405 676h3V690.5h-3zM409 539h3V555h-3zM409 676h3V690.5h-3zM415 539h1V551h-1zM415 555h1V584h-1zM416 535h1V543h-1zM416 551h1V555h-1zM416 676h1V690.5h-1zM420 648h2V676h-2zM422 523h1V569h-1zM422 680h1V690.5h-1zM427 606h1V690.5h-1zM428 551h1V555h-1zM428 676h1V690.5h-1zM434 630h1V648h-1zM434 685h1V690.5h-1zM439 531h1V547h-1zM439 555h1V606h-1zM439 630h1V664h-1zM440 523h1V590h-1zM440 680h1V690.5h-1zM442 543h1V555h-1zM442 606h1V618h-1zM442 676h1V685h-1zM447 527h1V531h-1zM447 551h1V555h-1zM447 606h1V690.5h-1zM452 543h1V555h-1zM452 685h1V690.5h-1zM453 581h1V584h-1zM453 680h1V690.5h-1zM454 648h1V676h-1zM456 648h1V664h-1zM456 676h1V685h-1zM457 618h1V648h-1zM462 547h2V555h-2zM462 685h2V690.5h-2zM468 584h1V590h-1zM468 648h1V676h-1zM470 606h3V618h-3zM473 630h3V648h-3zM473 680h3V690.5h-3zM476 527h1V531h-1zM476 555h1V606h-1zM476 664h1V690.5h-1zM478 569h1V590h-1zM478 664h1V690.5h-1zM481 535h1V547h-1zM481 584h1V680h-1zM487 581h1V584h-1zM487 648h1V690.5h-1zM488 618h1V690.5h-1zM493 581h1V630h-1zM493 676h1V690.5h-1zM494 527h1V535h-1zM494 555h1V584h-1zM494 618h1V630h-1zM494 680h1V690.5h-1zM495 543h1V606h-1zM495 685h1V690.5h-1zM496 535h1V539h-1zM496 584h1V618h-1zM496 648h1V676h-1zM496 685h1V690.5h-1zM503 584h2V606h-2zM503 680h2V690.5h-2zM508 551h3V555h-3zM508 606h3V648h-3zM508 664h3V676h-3zM508 680h3V690.5h-3zM511 527h1V543h-1zM511 664h1V690.5h-1zM512 551h4V555h-4zM512 584h4V648h-4zM516 590h1V606h-1zM518 676h1V690.5h-1zM523 590h1V606h-1zM523 676h1V690.5h-1zM526 523h2V539h-2zM528 551h1V555h-1zM528 664h1V690.5h-1zM533 680h1V690.5h-1zM536 523h1V547h-1zM539 590h1V648h-1zM548 664h1V690.5h-1zM554 527h1V539h-1zM554 555h1V584h-1zM556 648h1V676h-1zM559 527h1V555h-1zM559 569h1V590h-1zM568 555h1V581h-1zM568 648h1V690.5h-1zM575 527h1V551h-1zM575 584h1V648h-1zM577 535h1V539h-1zM577 547h1V555h-1zM577 590h1V606h-1zM586 527h1V555h-1zM586 606h1V618h-1zM600 543h2V555h-2zM600 584h2V685h-2zM603 664h1V690.5h-1zM605 676h1V690.5h-1zM607 527h2V535h-2zM607 569h2V648h-2zM607 680h2V690.5h-2zM613 606h1V676h-1zM613 685h1V690.5h-1zM615 555h1V581h-1zM615 680h1V690.5h-1zM626 584h1V630h-1zM626 648h1V680h-1zM626 685h1V690.5h-1zM628 551h1V555h-1zM628 676h1V690.5h-1zM630 527h1V551h-1zM630 581h1V606h-1zM630 648h1V685h-1zM644 547h1V555h-1zM644 680h1V690.5h-1zM653 527h1V539h-1zM653 543h1V551h-1zM653 680h1V690.5h-1zM662 584h1V606h-1zM662 676h1V690.5h-1zM663 680h1V690.5h-1zM664 527h1V535h-1zM664 547h1V551h-1zM677 555h1V584h-1zM679 535h1V569h-1zM679 630h1V648h-1zM680 527h1V535h-1zM680 606h1V618h-1zM680 676h1V690.5h-1zM682 539h1V555h-1zM682 584h1V606h-1zM682 676h1V690.5h-1zM690 664h1V690.5h-1zM691 527h1V551h-1zM691 685h1V690.5h-1zM693 531h1V569h-1zM693 584h1V606h-1zM696 527h2V543h-2zM696 606h2V676h-2zM700 527h1V543h-1zM700 630h1V676h-1zM700 685h1V690.5h-1zM702 527h1V543h-1zM702 555h1V606h-1zM702 648h1V676h-1zM702 685h1V690.5h-1zM705 539h1V547h-1zM705 685h1V690.5h-1zM706 527h1V531h-1zM706 551h1V555h-1zM706 584h1V606h-1zM712 551h1V584h-1zM712 676h1V690.5h-1zM713 606h2V664h-2zM715 606h1V618h-1zM715 664h1V690.5h-1zM716 547h1V551h-1zM716 584h1V690.5h-1zM723 685h1V690.5h-1zM746 648h1V690.5h-1zM750 527h1V555h-1zM750 676h1V690.5h-1zM751 527h1V555h-1zM751 606h1V630h-1zM751 648h1V690.5h-1zM752 618h1V648h-1zM752 676h1V685h-1zM753 535h1V606h-1zM753 618h1V630h-1zM753 664h1V685h-1zM754 606h1V648h-1zM758 527h2V531h-2zM758 555h2V569h-2zM758 606h2V648h-2zM760 685h2V690.5h-2zM762 680h1V690.5h-1zM771 680h1V690.5h-1zM773 551h1V584h-1zM773 606h1V648h-1zM773 685h1V690.5h-1zM784 584h4V690.5h-4zM791 535h1V547h-1zM791 606h1V664h-1zM791 680h1V690.5h-1zM792 648h1V690.5h-1zM796 606h1V648h-1zM799 648h3V690.5h-3zM804 527h1V590h-1zM804 648h1V685h-1zM807 531h1V555h-1zM807 606h1V648h-1zM807 680h1V690.5h-1zM809 527h2V555h-2zM809 676h2V690.5h-2zM814 569h1V590h-1zM814 606h1V648h-1zM820 523h1V535h-1zM820 555h1V590h-1zM820 676h1V685h-1zM824 527h2V555h-2zM824 584h2V606h-2zM824 648h2V690.5h-2zM841 527h1V539h-1zM841 618h1V648h-1zM841 676h1V685h-1zM848 539h1V543h-1zM848 685h1V690.5h-1zM849 531h1V535h-1zM849 539h1V551h-1zM849 590h1V606h-1zM849 680h1V690.5h-1zM855 648h1V690.5h-1zM856 676h4V690.5h-4zM863 535h4V551h-4zM863 581h4V584h-4zM863 685h4V690.5h-4zM872 676h2V690.5h-2zM884 527h1V543h-1zM884 547h1V551h-1zM884 606h1V680h-1zM884 685h1V690.5h-1zM885 606h2V676h-2zM910 630h2V690.5h-2zM917 535h2V555h-2zM917 685h2V690.5h-2zM934 527h1V648h-1zM934 680h1V690.5h-1zM935 514h1V531h-1zM935 535h1V606h-1zM935 648h1V690.5h-1zM936 527h1V555h-1zM936 584h1V690.5h-1zM940 630h1V648h-1zM940 680h1V690.5h-1zM946 551h2V555h-2zM946 590h2V690.5h-2zM950 535h1V551h-1zM950 664h1V690.5h-1zM955 543h2V551h-2zM955 584h2V618h-2zM955 648h2V676h-2zM955 680h2V690.5h-2zM957 527h1V535h-1zM957 606h1V648h-1zM957 676h1V690.5h-1zM958 676h1V690.5h-1zM961 527h1V539h-1zM961 581h1V584h-1zM961 680h1V690.5h-1zM962 676h3V690.5h-3zM967 527h1V555h-1zM967 664h1V676h-1zM972 527h1V539h-1zM972 555h1V584h-1zM972 618h1V680h-1zM972 685h1V690.5h-1zM986 527h2V569h-2zM986 676h2V685h-2zM991 584h1V648h-1zM991 676h1V690.5h-1zM1000 527h1V531h-1zM1000 569h1V581h-1zM1000 648h1V664h-1zM1000 676h1V690.5h-1zM1006 606h1V648h-1zM1011 648h1V690.5h-1zM1013 606h2V630h-2zM1013 648h2V690.5h-2zM1016 543h1V584h-1zM1016 648h1V690.5h-1zM1020 551h1V555h-1zM1020 569h1V618h-1zM1020 676h1V685h-1zM1021 569h3V584h-3zM1025 590h1V606h-1zM1025 676h1V690.5h-1zM1026 527h1V535h-1zM1026 555h1V569h-1zM1026 648h1V690.5h-1zM1032 527h1V555h-1zM1034 648h1V690.5h-1zM1041 555h1V618h-1zM1041 676h1V690.5h-1zM1045 539h1V543h-1zM1045 584h1V648h-1zM1046 648h1V664h-1zM1046 676h1V690.5h-1zM1049 648h1V690.5h-1zM1053 584h1V648h-1zM1056 527h1V547h-1zM1056 606h1V618h-1zM1056 676h1V680h-1zM1061 527h1V531h-1zM1061 569h1V581h-1zM1061 664h1V690.5h-1zM1067 527h1V535h-1zM1067 606h1V690.5h-1zM1068 527h1V555h-1zM1075 547h2V555h-2zM1075 676h2V690.5h-2z"/></clipPath></defs>
<rect x="95" y="514" width="986" height="176.5" fill="url(#g4v0)" clip-path="url(#c4v0)"/>
<rect x="95" y="514" width="986" height="176.5" fill="url(#g4v1)" clip-path="url(#c4v1)"/>
<rect x="95" y="514" width="986" height="176.5" fill="url(#g4v2)" clip-path="url(#c4v2)"/>
<clipPath id="p3c"><rect x="96" y="421" width="984" height="88"/></clipPath>
<g clip-path="url(#p3c)" shape-rendering="geometricPrecision">
<path d="M98.0 509.5 L99.5 504.4 L101.0 506.7 L102.5 509.5" fill="none" stroke="#ff0000" stroke-width="1.1" stroke-linejoin="miter"/>
<path d="M103.0 509.5 L104.5 508.3 L106.5 506.4 L108.0 508.0 L110.0 508.2 L111.5 509.5" fill="none" stroke="#ff0000" stroke-width="1.1" stroke-linejoin="miter"/>
<path d="M120.0 509.5 L122.0 508.3 L123.5 508.3 L125.0 507.1 L126.5 505.8 L128.0 509.5" fill="none" stroke="#ff0000" stroke-width="1.1" stroke-linejoin="miter"/>
<path d="M134.5 509.5 L137.0 507.6 L138.5 505.8 L140.0 505.7 L142.5 507.5 L144.0 509.5" fill="none" stroke="#ff0000" stroke-width="1.1" stroke-linejoin="miter"/>
<path d="M142.0 509.5 L144.0 504.3 L146.0 505.2 L147.5 501.4 L149.0 509.5" fill="none" stroke="#ff0000" stroke-width="1.1" stroke-linejoin="miter"/>
<path d="M149.5 509.5 L151.0 503.3 L153.5 504.0 L155.0 509.5" fill="none" stroke="#ff0000" stroke-width="1.1" stroke-linejoin="miter"/>
<path d="M155.5 509.5 L157.5 503.0 L159.0 507.4 L161.0 507.0 L162.5 509.5" fill="none" stroke="#ff0000" stroke-width="1.1" stroke-linejoin="miter"/>
<path d="M163.0 509.5 L165.0 508.1 L167.5 507.8 L170.0 503.3 L171.5 509.5" fill="none" stroke="#ff0000" stroke-width="1.1" stroke-linejoin="miter"/>
<path d="M203.0 509.5 L205.0 507.8 L206.5 506.5 L208.0 505.4 L209.5 509.5" fill="none" stroke="#ff0000" stroke-width="1.1" stroke-linejoin="miter"/>
<path d="M254.0 509.5 L256.5 507.0 L259.0 507.2 L260.5 509.5" fill="none" stroke="#ff0000" stroke-width="1.1" stroke-linejoin="miter"/>
<path d="M433.0 509.5 L435.5 508.0 L438.0 507.8 L439.5 509.5" fill="none" stroke="#ff0000" stroke-width="1.1" stroke-linejoin="miter"/>
<path d="M468.0 509.5 L470.0 503.7 L471.5 504.8 L474.0 502.6 L475.5 509.5" fill="none" stroke="#ff0000" stroke-width="1.1" stroke-linejoin="miter"/>
<path d="M484.0 509.5 L486.5 504.0 L488.0 509.5" fill="none" stroke="#ff0000" stroke-width="1.1" stroke-linejoin="miter"/>
<path d="M496.5 509.5 L498.5 505.5 L501.0 506.5 L502.5 509.5" fill="none" stroke="#ff0000" stroke-width="1.1" stroke-linejoin="miter"/>
<path d="M557.0 509.5 L559.0 508.2 L560.5 505.5 L562.0 509.5" fill="none" stroke="#ff0000" stroke-width="1.1" stroke-linejoin="miter"/>
<path d="M601.0 510.5 L602.5 506.6 L604.5 507.0 L606.5 504.0 L608.5 500.9 L610.5 510.5 L612.5 502.6 L614.0 505.8 L616.0 510.5 L618.5 501.9 L621.0 510.5 L623.0 510.5 L625.0 510.5 L628.0 504.8 L630.5 505.2 L633.5 503.0 L635.5 503.1 L637.5 510.5 L639.5 510.5 L641.5 504.2 L643.5 505.6 L646.5 504.8 L648.0 510.5 L650.0 507.7 L651.5 504.4 L653.0 507.0 L655.0 501.7 L657.0 501.8 L659.0 507.8 L661.0 499.6 L663.0 510.5 L665.0 501.0 L668.0 506.7 L671.0 506.8 L672.5 503.4 L674.0 505.5 L676.0 506.9 L678.5 510.5 L681.0 505.5 L683.5 502.3 L685.5 502.1 L687.5 506.4 L689.0 507.9 L691.0 507.8 L693.5 500.8 L695.5 504.9 L697.0 507.3 L699.5 510.5 L701.5 499.6 L704.5 507.8 L706.5 510.5 L708.5 510.5 L711.0 510.5 L713.0 507.1 L716.0 507.6 L717.5 510.5 L720.5 510.5 L722.0 510.5 L724.0 510.5 L727.0 502.9 L730.0 506.5 L732.5 510.5 L735.5 507.8 L738.5 504.7 L741.5 510.5 L744.5 505.4 L746.0 505.4 L748.0 510.5 L749.5 510.5 L751.5 502.0 L754.0 505.2 L757.0 505.8 L758.5 507.7 L761.5 503.1 L764.5 510.5 L767.0 510.5 L768.5 506.9 L770.5 510.5 L773.0 506.3 L775.5 502.4 L777.0 505.1 L778.5 506.5 L780.5 507.4 L783.0 510.5 L785.0 503.1 L787.0 506.7 L790.0 510.5 L792.5 507.5 L795.5 510.5 L797.0 503.4 L799.5 510.5 L802.5 501.7 L804.5 503.9 L806.5 510.5 L808.0 510.5 L811.0 510.5 L813.0 510.5 L816.0 510.5 L817.5 507.0 L820.0 507.3 L822.5 506.2 L824.5 506.3 L826.0 508.0 L828.0 507.5 L830.0 503.9 L832.0 510.5 L833.5 503.5 L836.5 510.5 L839.0 504.2 L841.0 510.5 L843.0 507.3 L845.0 506.6 L847.0 506.1 L848.5 505.2 L851.5 504.8 L853.0 501.9 L856.0 505.1 L858.0 503.9 L861.0 510.5 L863.5 506.7 L865.5 503.6 L867.5 506.9 L870.0 506.2 L872.0 507.7 L875.0 501.5 L877.0 506.5 L879.5 505.5 L881.5 510.5 L883.5 506.6 L885.5 510.5 L888.5 510.5 L890.0 506.1 L892.5 507.1 L894.5 507.7 L896.5 506.4 L899.5 504.4 L901.5 510.5 L903.5 505.1 L906.0 500.1 L907.5 510.5 L910.0 504.0 L912.5 501.5 L914.0 503.8 L917.0 499.6 L919.0 507.0 L921.0 504.9 L923.5 510.5 L925.0 510.5 L927.0 510.5 L928.5 506.6 L930.5 505.6 L933.0 507.5 L934.5 503.8 L936.5 507.0 L939.5 510.5 L942.5 505.9 L944.5 504.0 L947.0 505.5 L948.5 500.7 L950.5 510.5 L952.5 505.0 L955.0 510.5 L957.0 503.8 L959.0 504.9 L961.5 506.2 L963.0 504.7 L966.0 510.5 L968.5 502.3 L970.5 510.5 L972.5 510.5 L974.5 510.5 L977.5 507.2 L979.5 503.9 L981.0 502.9 L983.5 510.5 L985.0 502.9 L986.5 507.2 L989.0 500.0 L990.5 499.8 L992.5 510.5 L995.5 507.9 L998.0 503.6 L1000.5 510.5 L1002.0 510.5 L1003.5 503.7 L1005.0 504.6 L1007.5 504.3 L1010.0 510.5 L1012.5 510.5 L1015.5 502.7 L1017.5 505.9 L1020.0 510.5 L1022.5 510.5 L1024.0 504.4 L1025.5 510.5 L1027.0 502.1 L1029.0 503.7 L1030.5 510.5 L1032.5 502.3 L1035.5 501.0 L1037.0 510.5 L1039.0 510.5 L1041.5 502.0 L1043.5 500.2 L1045.5 502.8 L1047.5 504.5 L1050.5 510.5 L1052.5 504.5 L1055.5 510.5 L1057.5 507.3 L1060.0 510.5 L1061.5 505.5 L1063.5 500.0 L1065.0 510.5 L1066.5 510.5 L1069.0 504.8 L1071.5 510.5 L1073.5 505.2 L1075.5 504.2 L1077.0 506.7 L1079.0 506.3" fill="none" stroke="#ff0000" stroke-width="1.1" stroke-linejoin="miter"/>
<path d="M142.5 509.5 L142.5 495.4 L146.0 503.8 L147.1 509.5" fill="none" stroke="#0000ff" stroke-width="1.3" stroke-linejoin="miter"/>
<path d="M152.3 509.5 L152.3 495.4 L154.4 509.5" fill="none" stroke="#0000ff" stroke-width="1.3" stroke-linejoin="miter"/>
<path d="M162.3 509.5 L162.3 491.2 L162.5 509.5" fill="none" stroke="#0000ff" stroke-width="1.3" stroke-linejoin="miter"/>
<path d="M202.3 509.5 L203.3 503.3 L204.8 509.5" fill="none" stroke="#0000ff" stroke-width="1.3" stroke-linejoin="miter"/>
<path d="M239.8 509.5 L244.6 491.2 L248.1 509.5 L251.2 485.4 L262.7 509.5" fill="none" stroke="#0000ff" stroke-width="1.3" stroke-linejoin="miter"/>
<path d="M267.9 509.5 L275.2 489.2 L278.3 506.9 L282.5 498.1 L282.5 509.5" fill="none" stroke="#0000ff" stroke-width="1.3" stroke-linejoin="miter"/>
<path d="M303.3 509.5 L309.6 488.5 L319.0 487.1 L327.3 509.5" fill="none" stroke="#0000ff" stroke-width="1.3" stroke-linejoin="miter"/>
<path d="M338.8 509.5 L345.0 496.5" fill="none" stroke="#0000ff" stroke-width="1.3" stroke-linejoin="miter"/>
<path d="M340.0 496.5 L347.7 490.6 L350.4 509.5" fill="none" stroke="#0000ff" stroke-width="1.3" stroke-linejoin="miter"/>
<path d="M352.5 509.5 L353.5 498.1 L354.2 509.5" fill="none" stroke="#0000ff" stroke-width="1.3" stroke-linejoin="miter"/>
<path d="M364.6 509.5 L364.6 496.5 L368.1 498.1 L374.4 498.1 L374.4 509.5" fill="none" stroke="#0000ff" stroke-width="1.3" stroke-linejoin="miter"/>
<path d="M384.2 509.5 L388.3 487.1 L391.7 494.4 L391.7 509.5" fill="none" stroke="#0000ff" stroke-width="1.3" stroke-linejoin="miter"/>
<path d="M408.3 509.5 L408.3 494.4 L411.9 499.6 L415.4 483.3 L415.4 509.5" fill="none" stroke="#0000ff" stroke-width="1.3" stroke-linejoin="miter"/>
<path d="M463.5 509.5 L463.5 499.2 L463.8 509.5" fill="none" stroke="#0000ff" stroke-width="1.3" stroke-linejoin="miter"/>
<path d="M473.3 509.5 L473.3 498.5 L476.5 492.9 L476.5 509.5" fill="none" stroke="#0000ff" stroke-width="1.3" stroke-linejoin="miter"/>
<path d="M487.5 509.5 L487.5 491.2 L487.7 509.5" fill="none" stroke="#0000ff" stroke-width="1.3" stroke-linejoin="miter"/>
<path d="M500.4 509.5 L500.4 488.1 L504.6 495.0 L504.6 509.5" fill="none" stroke="#0000ff" stroke-width="1.3" stroke-linejoin="miter"/>
<path d="M521.2 509.5 L521.2 499.6 L528.5 486.0 L531.7 493.3 L531.7 509.5" fill="none" stroke="#0000ff" stroke-width="1.3" stroke-linejoin="miter"/>
<path d="M541.5 509.5 L541.5 488.1 L546.2 494.4 L552.5 495.4 L552.5 509.5" fill="none" stroke="#0000ff" stroke-width="1.3" stroke-linejoin="miter"/>
<path d="M569.2 509.5 L569.2 496.5 L572.3 503.8 L572.3 509.5" fill="none" stroke="#0000ff" stroke-width="1.3" stroke-linejoin="miter"/>
<path d="M579.2 509.5 L579.2 503.3 L579.4 509.5" fill="none" stroke="#0000ff" stroke-width="1.3" stroke-linejoin="miter"/>
<path d="M599.2 509.5 L599.2 495.4 L603.8 491.2 L606.9 497.5 L610.4 495.4 L617.3 500.6 L617.3 509.5" fill="none" stroke="#0000ff" stroke-width="1.3" stroke-linejoin="miter"/>
<path d="M629.8 509.5 L634.4 488.1 L640.2 499.2 L645.4 495.4 L651.7 495.4 L654.8 503.8 L661.0 506.9 L661.0 509.5" fill="none" stroke="#0000ff" stroke-width="1.3" stroke-linejoin="miter"/>
<path d="M671.5 509.5 L671.5 491.2 L673.5 504.8 L674.6 509.5" fill="none" stroke="#0000ff" stroke-width="1.3" stroke-linejoin="miter"/>
<path d="M684.0 509.5 L688.5 497.5 L692.3 509.5" fill="none" stroke="#0000ff" stroke-width="1.3" stroke-linejoin="miter"/>
<path d="M695.0 509.5 L695.4 491.2 L695.6 509.5" fill="none" stroke="#0000ff" stroke-width="1.3" stroke-linejoin="miter"/>
<path d="M722.5 509.5 L722.5 488.1 L726.7 502.7 L726.7 509.5" fill="none" stroke="#0000ff" stroke-width="1.3" stroke-linejoin="miter"/>
<path d="M733.3 509.5 L733.3 488.1 L733.5 509.5" fill="none" stroke="#0000ff" stroke-width="1.3" stroke-linejoin="miter"/>
<path d="M743.3 509.5 L743.3 495.0 L743.5 509.5" fill="none" stroke="#0000ff" stroke-width="1.3" stroke-linejoin="miter"/>
<path d="M763.1 509.5 L763.1 489.2 L763.3 509.5" fill="none" stroke="#0000ff" stroke-width="1.3" stroke-linejoin="miter"/>
<path d="M770.0 509.5 L770.0 492.9 L773.5 504.8 L774.6 509.5" fill="none" stroke="#0000ff" stroke-width="1.3" stroke-linejoin="miter"/>
<path d="M790.2 509.5 L794.4 488.1 L798.5 495.4 L798.5 509.5" fill="none" stroke="#0000ff" stroke-width="1.3" stroke-linejoin="miter"/>
<path d="M808.3 509.5 L808.3 490.2 L812.1 506.9 L813.1 509.5" fill="none" stroke="#0000ff" stroke-width="1.3" stroke-linejoin="miter"/>
<path d="M835.2 509.5 L835.2 489.2 L841.5 498.5 L845.6 493.3 L849.8 498.5 L849.8 509.5" fill="none" stroke="#0000ff" stroke-width="1.3" stroke-linejoin="miter"/>
<path d="M880.4 509.5 L880.4 492.3 L880.6 509.5" fill="none" stroke="#0000ff" stroke-width="1.3" stroke-linejoin="miter"/>
<path d="M886.2 509.5 L886.2 498.1 L886.5 509.5" fill="none" stroke="#0000ff" stroke-width="1.3" stroke-linejoin="miter"/>
<path d="M897.3 509.5 L897.3 487.1 L897.5 509.5" fill="none" stroke="#0000ff" stroke-width="1.3" stroke-linejoin="miter"/>
<path d="M907.5 509.5 L907.5 498.5 L910.2 492.3 L919.6 507.9 L920.6 509.5" fill="none" stroke="#0000ff" stroke-width="1.3" stroke-linejoin="miter"/>
<path d="M923.8 509.5 L923.8 497.5 L927.5 490.2 L932.1 501.7 L932.1 509.5" fill="none" stroke="#0000ff" stroke-width="1.3" stroke-linejoin="miter"/>
<path d="M938.3 509.5 L938.3 495.4 L940.4 507.9 L940.8 509.5" fill="none" stroke="#0000ff" stroke-width="1.3" stroke-linejoin="miter"/>
<path d="M948.3 509.5 L948.3 491.2 L956.0 500.6 L958.1 495.4 L962.3 494.4 L962.3 509.5" fill="none" stroke="#0000ff" stroke-width="1.3" stroke-linejoin="miter"/>
<path d="M968.5 509.5 L968.5 491.2 L971.7 507.9 L972.1 509.5" fill="none" stroke="#0000ff" stroke-width="1.3" stroke-linejoin="miter"/>
<path d="M982.1 509.5 L982.1 498.5 L989.4 503.8 L992.5 486.0 L992.5 509.5" fill="none" stroke="#0000ff" stroke-width="1.3" stroke-linejoin="miter"/>
<path d="M999.2 509.5 L999.2 484.6 L1003.3 483.3 L1003.3 509.5" fill="none" stroke="#0000ff" stroke-width="1.3" stroke-linejoin="miter"/>
<path d="M1009.6 509.5 L1009.6 495.4 L1009.8 509.5" fill="none" stroke="#0000ff" stroke-width="1.3" stroke-linejoin="miter"/>
<path d="M1020.6 509.5 L1020.6 494.4 L1023.8 483.3 L1023.8 509.5" fill="none" stroke="#0000ff" stroke-width="1.3" stroke-linejoin="miter"/>
<path d="M1030.4 509.5 L1030.4 491.2 L1030.6 509.5" fill="none" stroke="#0000ff" stroke-width="1.3" stroke-linejoin="miter"/>
<path d="M1040.4 509.5 L1040.4 495.4 L1044.6 503.3 L1044.6 509.5" fill="none" stroke="#0000ff" stroke-width="1.3" stroke-linejoin="miter"/>
<path d="M1063.3 509.5 L1064.4 502.7 L1074.8 486.0" fill="none" stroke="#0000ff" stroke-width="1.3" stroke-linejoin="miter"/>
<line x1="166.5" y1="509.5" x2="166.5" y2="496.5" stroke="#00ff00" stroke-width="1.3"/>
<line x1="268.3" y1="509.5" x2="268.3" y2="469.4" stroke="#00ff00" stroke-width="1.3"/>
<line x1="292.5" y1="509.5" x2="292.5" y2="484.4" stroke="#00ff00" stroke-width="1.3"/>
<line x1="367.1" y1="509.5" x2="367.1" y2="503.3" stroke="#00ff00" stroke-width="1.3"/>
<line x1="446.2" y1="509.5" x2="446.2" y2="501.2" stroke="#00ff00" stroke-width="1.3"/>
<line x1="480.6" y1="509.5" x2="480.6" y2="500.0" stroke="#00ff00" stroke-width="1.3"/>
<line x1="620.4" y1="509.5" x2="620.4" y2="503.8" stroke="#00ff00" stroke-width="1.3"/>
<line x1="647.5" y1="509.5" x2="647.5" y2="504.8" stroke="#00ff00" stroke-width="1.3"/>
<line x1="784.6" y1="509.5" x2="784.6" y2="498.1" stroke="#00ff00" stroke-width="1.3"/>
<line x1="842.5" y1="509.5" x2="842.5" y2="478.3" stroke="#00ff00" stroke-width="1.3"/>
<line x1="873.3" y1="509.5" x2="873.3" y2="499.2" stroke="#00ff00" stroke-width="1.3"/>
<line x1="897.3" y1="509.5" x2="897.3" y2="496.5" stroke="#00ff00" stroke-width="1.3"/>
<line x1="1006.7" y1="509.5" x2="1006.7" y2="502.7" stroke="#00ff00" stroke-width="1.3"/>
<line x1="1071.2" y1="509.5" x2="1071.2" y2="498.1" stroke="#00ff00" stroke-width="1.3"/>
</g>
<text x="446.50" y="20.00" text-anchor="start" font-size="12" fill="#333333" textLength="214.00" lengthAdjust="spacing">LEMMS and CHEMS Particle Pressures</text>
<text x="669.00" y="20.00" text-anchor="start" font-size="12" fill="#333333" textLength="59.00" lengthAdjust="spacing">2014:113</text>
<text x="10.50" y="28.00" text-anchor="start" font-size="12" fill="#333333" textLength="58.50" lengthAdjust="spacingAndGlyphs">CHEMS Pr.</text>
<text x="10.50" y="209.60" text-anchor="start" font-size="12" fill="#333333" textLength="57.50" lengthAdjust="spacingAndGlyphs">LEMMS Pr.</text>
<line x1="91" y1="212.5" x2="95" y2="212.5" stroke="#333" stroke-width="1"/>
<line x1="91" y1="200.5" x2="95" y2="200.5" stroke="#333" stroke-width="1"/>
<line x1="91" y1="190.5" x2="95" y2="190.5" stroke="#333" stroke-width="1"/>
<line x1="91" y1="183.5" x2="95" y2="183.5" stroke="#333" stroke-width="1"/>
<line x1="91" y1="176.5" x2="95" y2="176.5" stroke="#333" stroke-width="1"/>
<line x1="91" y1="171.5" x2="95" y2="171.5" stroke="#333" stroke-width="1"/>
<line x1="91" y1="166.5" x2="95" y2="166.5" stroke="#333" stroke-width="1"/>
<line x1="87" y1="161.5" x2="95" y2="161.5" stroke="#333" stroke-width="1"/>
<line x1="91" y1="132.5" x2="95" y2="132.5" stroke="#333" stroke-width="1"/>
<line x1="91" y1="115.5" x2="95" y2="115.5" stroke="#333" stroke-width="1"/>
<line x1="91" y1="103.5" x2="95" y2="103.5" stroke="#333" stroke-width="1"/>
<line x1="91" y1="93.5" x2="95" y2="93.5" stroke="#333" stroke-width="1"/>
<line x1="91" y1="86.5" x2="95" y2="86.5" stroke="#333" stroke-width="1"/>
<line x1="91" y1="79.5" x2="95" y2="79.5" stroke="#333" stroke-width="1"/>
<line x1="91" y1="74.5" x2="95" y2="74.5" stroke="#333" stroke-width="1"/>
<line x1="91" y1="69.5" x2="95" y2="69.5" stroke="#333" stroke-width="1"/>
<line x1="87" y1="64.5" x2="95" y2="64.5" stroke="#333" stroke-width="1"/>
<line x1="91" y1="35.5" x2="95" y2="35.5" stroke="#333" stroke-width="1"/>
<text x="60.57" y="71.80" text-anchor="start" font-size="12" fill="#333333" textLength="13.35" lengthAdjust="spacing">10</text>
<text x="74.42" y="65.60" text-anchor="start" font-size="12" fill="#333333" textLength="7.58" lengthAdjust="spacing">2</text>
<text x="60.57" y="168.70" text-anchor="start" font-size="12" fill="#333333" textLength="13.35" lengthAdjust="spacing">10</text>
<text x="74.42" y="162.50" text-anchor="start" font-size="12" fill="#333333" textLength="7.58" lengthAdjust="spacing">1</text>
<text x="50.20" y="124.50" text-anchor="middle" font-size="12" fill="#333333" textLength="72.50" lengthAdjust="spacing" transform="rotate(-90 50.20 124.50)">Energy (keV)</text>
<rect x="1092" y="30" width="12.5" height="191" fill="url(#cmap)"/>
<line x1="1104.5" y1="29" x2="1104.5" y2="221" stroke="#333" stroke-width="1"/>
<line x1="1104" y1="29.5" x2="1113" y2="29.5" stroke="#333" stroke-width="1"/>
<line x1="1104" y1="32.5" x2="1109" y2="32.5" stroke="#333" stroke-width="1"/>
<line x1="1104" y1="35.5" x2="1109" y2="35.5" stroke="#333" stroke-width="1"/>
<line x1="1104" y1="38.5" x2="1109" y2="38.5" stroke="#333" stroke-width="1"/>
<line x1="1104" y1="42.5" x2="1109" y2="42.5" stroke="#333" stroke-width="1"/>
<line x1="1104" y1="46.5" x2="1109" y2="46.5" stroke="#333" stroke-width="1"/>
<line x1="1104" y1="52.5" x2="1109" y2="52.5" stroke="#333" stroke-width="1"/>
<line x1="1104" y1="59.5" x2="1109" y2="59.5" stroke="#333" stroke-width="1"/>
<line x1="1104" y1="69.5" x2="1109" y2="69.5" stroke="#333" stroke-width="1"/>
<line x1="1104" y1="87.5" x2="1113" y2="87.5" stroke="#333" stroke-width="1"/>
<line x1="1104" y1="89.5" x2="1109" y2="89.5" stroke="#333" stroke-width="1"/>
<line x1="1104" y1="92.5" x2="1109" y2="92.5" stroke="#333" stroke-width="1"/>
<line x1="1104" y1="96.5" x2="1109" y2="96.5" stroke="#333" stroke-width="1"/>
<line x1="1104" y1="100.5" x2="1109" y2="100.5" stroke="#333" stroke-width="1"/>
<line x1="1104" y1="104.5" x2="1109" y2="104.5" stroke="#333" stroke-width="1"/>
<line x1="1104" y1="110.5" x2="1109" y2="110.5" stroke="#333" stroke-width="1"/>
<line x1="1104" y1="117.5" x2="1109" y2="117.5" stroke="#333" stroke-width="1"/>
<line x1="1104" y1="127.5" x2="1109" y2="127.5" stroke="#333" stroke-width="1"/>
<line x1="1104" y1="145.5" x2="1113" y2="145.5" stroke="#333" stroke-width="1"/>
<line x1="1104" y1="147.5" x2="1109" y2="147.5" stroke="#333" stroke-width="1"/>
<line x1="1104" y1="150.5" x2="1109" y2="150.5" stroke="#333" stroke-width="1"/>
<line x1="1104" y1="153.5" x2="1109" y2="153.5" stroke="#333" stroke-width="1"/>
<line x1="1104" y1="157.5" x2="1109" y2="157.5" stroke="#333" stroke-width="1"/>
<line x1="1104" y1="162.5" x2="1109" y2="162.5" stroke="#333" stroke-width="1"/>
<line x1="1104" y1="167.5" x2="1109" y2="167.5" stroke="#333" stroke-width="1"/>
<line x1="1104" y1="175.5" x2="1109" y2="175.5" stroke="#333" stroke-width="1"/>
<line x1="1104" y1="185.5" x2="1109" y2="185.5" stroke="#333" stroke-width="1"/>
<line x1="1104" y1="202.5" x2="1113" y2="202.5" stroke="#333" stroke-width="1"/>
<line x1="1104" y1="205.5" x2="1109" y2="205.5" stroke="#333" stroke-width="1"/>
<line x1="1104" y1="208.5" x2="1109" y2="208.5" stroke="#333" stroke-width="1"/>
<line x1="1104" y1="211.5" x2="1109" y2="211.5" stroke="#333" stroke-width="1"/>
<line x1="1104" y1="215.5" x2="1109" y2="215.5" stroke="#333" stroke-width="1"/>
<line x1="1104" y1="219.5" x2="1109" y2="219.5" stroke="#333" stroke-width="1"/>
<text x="1118.00" y="36.80" text-anchor="start" font-size="12" fill="#333333" textLength="13.35" lengthAdjust="spacing">10</text>
<text x="1131.65" y="30.60" text-anchor="start" font-size="12" fill="#333333" textLength="15.17" lengthAdjust="spacing">−9</text>
<text x="1118.00" y="94.47" text-anchor="start" font-size="12" fill="#333333" textLength="13.35" lengthAdjust="spacing">10</text>
<text x="1131.65" y="88.27" text-anchor="start" font-size="12" fill="#333333" textLength="22.75" lengthAdjust="spacing">−10</text>
<text x="1118.00" y="152.14" text-anchor="start" font-size="12" fill="#333333" textLength="13.35" lengthAdjust="spacing">10</text>
<text x="1131.65" y="145.94" text-anchor="start" font-size="12" fill="#333333" textLength="22.75" lengthAdjust="spacing">−11</text>
<text x="1118.00" y="209.81" text-anchor="start" font-size="12" fill="#333333" textLength="13.35" lengthAdjust="spacing">10</text>
<text x="1131.65" y="203.61" text-anchor="start" font-size="12" fill="#333333" textLength="22.75" lengthAdjust="spacing">−12</text>
<text x="1165.00" y="123.50" text-anchor="middle" font-size="12" fill="#333333" textLength="121.50" lengthAdjust="spacing" transform="rotate(90 1165.00 123.50)">pressure dyne/cm^2</text>
<line x1="91" y1="408.5" x2="95" y2="408.5" stroke="#333" stroke-width="1"/>
<line x1="91" y1="392.5" x2="95" y2="392.5" stroke="#333" stroke-width="1"/>
<line x1="91" y1="379.5" x2="95" y2="379.5" stroke="#333" stroke-width="1"/>
<line x1="91" y1="369.5" x2="95" y2="369.5" stroke="#333" stroke-width="1"/>
<line x1="91" y1="360.5" x2="95" y2="360.5" stroke="#333" stroke-width="1"/>
<line x1="91" y1="353.5" x2="95" y2="353.5" stroke="#333" stroke-width="1"/>
<line x1="91" y1="346.5" x2="95" y2="346.5" stroke="#333" stroke-width="1"/>
<line x1="87" y1="340.5" x2="95" y2="340.5" stroke="#333" stroke-width="1"/>
<line x1="91" y1="335.5" x2="95" y2="335.5" stroke="#333" stroke-width="1"/>
<line x1="91" y1="330.5" x2="95" y2="330.5" stroke="#333" stroke-width="1"/>
<line x1="91" y1="325.5" x2="95" y2="325.5" stroke="#333" stroke-width="1"/>
<line x1="91" y1="321.5" x2="95" y2="321.5" stroke="#333" stroke-width="1"/>
<line x1="91" y1="317.5" x2="95" y2="317.5" stroke="#333" stroke-width="1"/>
<line x1="91" y1="313.5" x2="95" y2="313.5" stroke="#333" stroke-width="1"/>
<line x1="91" y1="310.5" x2="95" y2="310.5" stroke="#333" stroke-width="1"/>
<line x1="91" y1="307.5" x2="95" y2="307.5" stroke="#333" stroke-width="1"/>
<line x1="91" y1="304.5" x2="95" y2="304.5" stroke="#333" stroke-width="1"/>
<line x1="87" y1="301.5" x2="95" y2="301.5" stroke="#333" stroke-width="1"/>
<line x1="91" y1="298.5" x2="95" y2="298.5" stroke="#333" stroke-width="1"/>
<line x1="91" y1="295.5" x2="95" y2="295.5" stroke="#333" stroke-width="1"/>
<line x1="91" y1="293.5" x2="95" y2="293.5" stroke="#333" stroke-width="1"/>
<line x1="91" y1="290.5" x2="95" y2="290.5" stroke="#333" stroke-width="1"/>
<line x1="91" y1="288.5" x2="95" y2="288.5" stroke="#333" stroke-width="1"/>
<line x1="91" y1="286.5" x2="95" y2="286.5" stroke="#333" stroke-width="1"/>
<line x1="91" y1="284.5" x2="95" y2="284.5" stroke="#333" stroke-width="1"/>
<line x1="91" y1="282.5" x2="95" y2="282.5" stroke="#333" stroke-width="1"/>
<line x1="91" y1="280.5" x2="95" y2="280.5" stroke="#333" stroke-width="1"/>
<line x1="87" y1="278.5" x2="95" y2="278.5" stroke="#333" stroke-width="1"/>
<line x1="91" y1="276.5" x2="95" y2="276.5" stroke="#333" stroke-width="1"/>
<line x1="91" y1="274.5" x2="95" y2="274.5" stroke="#333" stroke-width="1"/>
<line x1="91" y1="272.5" x2="95" y2="272.5" stroke="#333" stroke-width="1"/>
<line x1="91" y1="271.5" x2="95" y2="271.5" stroke="#333" stroke-width="1"/>
<line x1="91" y1="269.5" x2="95" y2="269.5" stroke="#333" stroke-width="1"/>
<line x1="91" y1="267.5" x2="95" y2="267.5" stroke="#333" stroke-width="1"/>
<line x1="91" y1="266.5" x2="95" y2="266.5" stroke="#333" stroke-width="1"/>
<line x1="91" y1="264.5" x2="95" y2="264.5" stroke="#333" stroke-width="1"/>
<line x1="91" y1="263.5" x2="95" y2="263.5" stroke="#333" stroke-width="1"/>
<line x1="87" y1="261.5" x2="95" y2="261.5" stroke="#333" stroke-width="1"/>
<line x1="91" y1="260.5" x2="95" y2="260.5" stroke="#333" stroke-width="1"/>
<line x1="91" y1="259.5" x2="95" y2="259.5" stroke="#333" stroke-width="1"/>
<line x1="91" y1="257.5" x2="95" y2="257.5" stroke="#333" stroke-width="1"/>
<line x1="91" y1="256.5" x2="95" y2="256.5" stroke="#333" stroke-width="1"/>
<line x1="91" y1="255.5" x2="95" y2="255.5" stroke="#333" stroke-width="1"/>
<line x1="91" y1="253.5" x2="95" y2="253.5" stroke="#333" stroke-width="1"/>
<line x1="91" y1="252.5" x2="95" y2="252.5" stroke="#333" stroke-width="1"/>
<line x1="91" y1="251.5" x2="95" y2="251.5" stroke="#333" stroke-width="1"/>
<line x1="91" y1="250.5" x2="95" y2="250.5" stroke="#333" stroke-width="1"/>
<line x1="87" y1="249.5" x2="95" y2="249.5" stroke="#333" stroke-width="1"/>
<line x1="91" y1="248.5" x2="95" y2="248.5" stroke="#333" stroke-width="1"/>
<line x1="91" y1="246.5" x2="95" y2="246.5" stroke="#333" stroke-width="1"/>
<line x1="91" y1="245.5" x2="95" y2="245.5" stroke="#333" stroke-width="1"/>
<line x1="91" y1="244.5" x2="95" y2="244.5" stroke="#333" stroke-width="1"/>
<line x1="91" y1="243.5" x2="95" y2="243.5" stroke="#333" stroke-width="1"/>
<line x1="91" y1="242.5" x2="95" y2="242.5" stroke="#333" stroke-width="1"/>
<line x1="91" y1="241.5" x2="95" y2="241.5" stroke="#333" stroke-width="1"/>
<line x1="91" y1="240.5" x2="95" y2="240.5" stroke="#333" stroke-width="1"/>
<line x1="91" y1="239.5" x2="95" y2="239.5" stroke="#333" stroke-width="1"/>
<line x1="87" y1="238.5" x2="95" y2="238.5" stroke="#333" stroke-width="1"/>
<line x1="91" y1="237.5" x2="95" y2="237.5" stroke="#333" stroke-width="1"/>
<line x1="91" y1="237.5" x2="95" y2="237.5" stroke="#333" stroke-width="1"/>
<line x1="91" y1="236.5" x2="95" y2="236.5" stroke="#333" stroke-width="1"/>
<line x1="91" y1="235.5" x2="95" y2="235.5" stroke="#333" stroke-width="1"/>
<line x1="91" y1="234.5" x2="95" y2="234.5" stroke="#333" stroke-width="1"/>
<line x1="91" y1="233.5" x2="95" y2="233.5" stroke="#333" stroke-width="1"/>
<line x1="91" y1="232.5" x2="95" y2="232.5" stroke="#333" stroke-width="1"/>
<line x1="91" y1="231.5" x2="95" y2="231.5" stroke="#333" stroke-width="1"/>
<line x1="91" y1="230.5" x2="95" y2="230.5" stroke="#333" stroke-width="1"/>
<line x1="87" y1="230.5" x2="95" y2="230.5" stroke="#333" stroke-width="1"/>
<line x1="91" y1="229.5" x2="95" y2="229.5" stroke="#333" stroke-width="1"/>
<line x1="91" y1="228.5" x2="95" y2="228.5" stroke="#333" stroke-width="1"/>
<line x1="91" y1="227.5" x2="95" y2="227.5" stroke="#333" stroke-width="1"/>
<line x1="91" y1="226.5" x2="95" y2="226.5" stroke="#333" stroke-width="1"/>
<line x1="91" y1="226.5" x2="95" y2="226.5" stroke="#333" stroke-width="1"/>
<line x1="91" y1="225.5" x2="95" y2="225.5" stroke="#333" stroke-width="1"/>
<line x1="91" y1="224.5" x2="95" y2="224.5" stroke="#333" stroke-width="1"/>
<text x="81.00" y="344.40" text-anchor="end" font-size="12" fill="#333333" textLength="26.54" lengthAdjust="spacing">100.</text>
<text x="81.00" y="305.09" text-anchor="end" font-size="12" fill="#333333" textLength="26.54" lengthAdjust="spacing">200.</text>
<text x="81.00" y="282.09" text-anchor="end" font-size="12" fill="#333333" textLength="26.54" lengthAdjust="spacing">300.</text>
<text x="81.00" y="265.77" text-anchor="end" font-size="12" fill="#333333" textLength="26.54" lengthAdjust="spacing">400.</text>
<text x="81.00" y="253.11" text-anchor="end" font-size="12" fill="#333333" textLength="26.54" lengthAdjust="spacing">500.</text>
<text x="81.00" y="242.77" text-anchor="end" font-size="12" fill="#333333" textLength="26.54" lengthAdjust="spacing">600.</text>
<text x="81.00" y="234.03" text-anchor="end" font-size="12" fill="#333333" textLength="26.54" lengthAdjust="spacing">700.</text>
<text x="46.50" y="320.20" text-anchor="middle" font-size="12" fill="#333333" textLength="72.50" lengthAdjust="spacing" transform="rotate(-90 46.50 320.20)">Energy (keV)</text>
<rect x="1092" y="226" width="12.5" height="190.5" fill="url(#cmap)"/>
<line x1="1104.5" y1="225" x2="1104.5" y2="416.5" stroke="#333" stroke-width="1"/>
<line x1="1104" y1="225.5" x2="1113" y2="225.5" stroke="#333" stroke-width="1"/>
<line x1="1104" y1="227.5" x2="1109" y2="227.5" stroke="#333" stroke-width="1"/>
<line x1="1104" y1="230.5" x2="1109" y2="230.5" stroke="#333" stroke-width="1"/>
<line x1="1104" y1="233.5" x2="1109" y2="233.5" stroke="#333" stroke-width="1"/>
<line x1="1104" y1="237.5" x2="1109" y2="237.5" stroke="#333" stroke-width="1"/>
<line x1="1104" y1="242.5" x2="1109" y2="242.5" stroke="#333" stroke-width="1"/>
<line x1="1104" y1="247.5" x2="1109" y2="247.5" stroke="#333" stroke-width="1"/>
<line x1="1104" y1="255.5" x2="1109" y2="255.5" stroke="#333" stroke-width="1"/>
<line x1="1104" y1="265.5" x2="1109" y2="265.5" stroke="#333" stroke-width="1"/>
<line x1="1104" y1="282.5" x2="1113" y2="282.5" stroke="#333" stroke-width="1"/>
<line x1="1104" y1="285.5" x2="1109" y2="285.5" stroke="#333" stroke-width="1"/>
<line x1="1104" y1="288.5" x2="1109" y2="288.5" stroke="#333" stroke-width="1"/>
<line x1="1104" y1="291.5" x2="1109" y2="291.5" stroke="#333" stroke-width="1"/>
<line x1="1104" y1="295.5" x2="1109" y2="295.5" stroke="#333" stroke-width="1"/>
<line x1="1104" y1="300.5" x2="1109" y2="300.5" stroke="#333" stroke-width="1"/>
<line x1="1104" y1="305.5" x2="1109" y2="305.5" stroke="#333" stroke-width="1"/>
<line x1="1104" y1="312.5" x2="1109" y2="312.5" stroke="#333" stroke-width="1"/>
<line x1="1104" y1="323.5" x2="1109" y2="323.5" stroke="#333" stroke-width="1"/>
<line x1="1104" y1="340.5" x2="1113" y2="340.5" stroke="#333" stroke-width="1"/>
<line x1="1104" y1="343.5" x2="1109" y2="343.5" stroke="#333" stroke-width="1"/>
<line x1="1104" y1="345.5" x2="1109" y2="345.5" stroke="#333" stroke-width="1"/>
<line x1="1104" y1="349.5" x2="1109" y2="349.5" stroke="#333" stroke-width="1"/>
<line x1="1104" y1="353.5" x2="1109" y2="353.5" stroke="#333" stroke-width="1"/>
<line x1="1104" y1="357.5" x2="1109" y2="357.5" stroke="#333" stroke-width="1"/>
<line x1="1104" y1="363.5" x2="1109" y2="363.5" stroke="#333" stroke-width="1"/>
<line x1="1104" y1="370.5" x2="1109" y2="370.5" stroke="#333" stroke-width="1"/>
<line x1="1104" y1="380.5" x2="1109" y2="380.5" stroke="#333" stroke-width="1"/>
<line x1="1104" y1="398.5" x2="1113" y2="398.5" stroke="#333" stroke-width="1"/>
<line x1="1104" y1="400.5" x2="1109" y2="400.5" stroke="#333" stroke-width="1"/>
<line x1="1104" y1="403.5" x2="1109" y2="403.5" stroke="#333" stroke-width="1"/>
<line x1="1104" y1="407.5" x2="1109" y2="407.5" stroke="#333" stroke-width="1"/>
<line x1="1104" y1="410.5" x2="1109" y2="410.5" stroke="#333" stroke-width="1"/>
<line x1="1104" y1="415.5" x2="1109" y2="415.5" stroke="#333" stroke-width="1"/>
<text x="1118.00" y="232.20" text-anchor="start" font-size="12" fill="#333333" textLength="13.35" lengthAdjust="spacing">10</text>
<text x="1131.65" y="226.00" text-anchor="start" font-size="12" fill="#333333" textLength="15.17" lengthAdjust="spacing">−9</text>
<text x="1118.00" y="289.90" text-anchor="start" font-size="12" fill="#333333" textLength="13.35" lengthAdjust="spacing">10</text>
<text x="1131.65" y="283.70" text-anchor="start" font-size="12" fill="#333333" textLength="22.75" lengthAdjust="spacing">−10</text>
<text x="1118.00" y="347.60" text-anchor="start" font-size="12" fill="#333333" textLength="13.35" lengthAdjust="spacing">10</text>
<text x="1131.65" y="341.40" text-anchor="start" font-size="12" fill="#333333" textLength="22.75" lengthAdjust="spacing">−11</text>
<text x="1118.00" y="405.30" text-anchor="start" font-size="12" fill="#333333" textLength="13.35" lengthAdjust="spacing">10</text>
<text x="1131.65" y="399.10" text-anchor="start" font-size="12" fill="#333333" textLength="22.75" lengthAdjust="spacing">−12</text>
<text x="1165.00" y="319.50" text-anchor="middle" font-size="12" fill="#333333" textLength="121.50" lengthAdjust="spacing" transform="rotate(90 1165.00 319.50)">pressure dyne/cm^2</text>
<rect x="95.5" y="420.5" width="985" height="89" fill="none" stroke="#333" stroke-width="1"/>
<line x1="91" y1="509.5" x2="95" y2="509.5" stroke="#333" stroke-width="1"/>
<line x1="91" y1="508.5" x2="95" y2="508.5" stroke="#333" stroke-width="1"/>
<line x1="91" y1="506.5" x2="95" y2="506.5" stroke="#333" stroke-width="1"/>
<line x1="91" y1="505.5" x2="95" y2="505.5" stroke="#333" stroke-width="1"/>
<line x1="91" y1="504.5" x2="95" y2="504.5" stroke="#333" stroke-width="1"/>
<line x1="87" y1="503.5" x2="95" y2="503.5" stroke="#333" stroke-width="1"/>
<line x1="91" y1="496.5" x2="95" y2="496.5" stroke="#333" stroke-width="1"/>
<line x1="91" y1="492.5" x2="95" y2="492.5" stroke="#333" stroke-width="1"/>
<line x1="91" y1="489.5" x2="95" y2="489.5" stroke="#333" stroke-width="1"/>
<line x1="91" y1="487.5" x2="95" y2="487.5" stroke="#333" stroke-width="1"/>
<line x1="91" y1="486.5" x2="95" y2="486.5" stroke="#333" stroke-width="1"/>
<line x1="91" y1="484.5" x2="95" y2="484.5" stroke="#333" stroke-width="1"/>
<line x1="91" y1="483.5" x2="95" y2="483.5" stroke="#333" stroke-width="1"/>
<line x1="91" y1="482.5" x2="95" y2="482.5" stroke="#333" stroke-width="1"/>
<line x1="87" y1="481.5" x2="95" y2="481.5" stroke="#333" stroke-width="1"/>
<line x1="91" y1="474.5" x2="95" y2="474.5" stroke="#333" stroke-width="1"/>
<line x1="91" y1="470.5" x2="95" y2="470.5" stroke="#333" stroke-width="1"/>
<line x1="91" y1="467.5" x2="95" y2="467.5" stroke="#333" stroke-width="1"/>
<line x1="91" y1="465.5" x2="95" y2="465.5" stroke="#333" stroke-width="1"/>
<line x1="91" y1="464.5" x2="95" y2="464.5" stroke="#333" stroke-width="1"/>
<line x1="91" y1="462.5" x2="95" y2="462.5" stroke="#333" stroke-width="1"/>
<line x1="91" y1="461.5" x2="95" y2="461.5" stroke="#333" stroke-width="1"/>
<line x1="91" y1="460.5" x2="95" y2="460.5" stroke="#333" stroke-width="1"/>
<line x1="87" y1="459.5" x2="95" y2="459.5" stroke="#333" stroke-width="1"/>
<line x1="91" y1="452.5" x2="95" y2="452.5" stroke="#333" stroke-width="1"/>
<line x1="91" y1="448.5" x2="95" y2="448.5" stroke="#333" stroke-width="1"/>
<line x1="91" y1="445.5" x2="95" y2="445.5" stroke="#333" stroke-width="1"/>
<line x1="91" y1="443.5" x2="95" y2="443.5" stroke="#333" stroke-width="1"/>
<line x1="91" y1="442.5" x2="95" y2="442.5" stroke="#333" stroke-width="1"/>
<line x1="91" y1="440.5" x2="95" y2="440.5" stroke="#333" stroke-width="1"/>
<line x1="91" y1="439.5" x2="95" y2="439.5" stroke="#333" stroke-width="1"/>
<line x1="91" y1="438.5" x2="95" y2="438.5" stroke="#333" stroke-width="1"/>
<line x1="87" y1="437.5" x2="95" y2="437.5" stroke="#333" stroke-width="1"/>
<line x1="91" y1="430.5" x2="95" y2="430.5" stroke="#333" stroke-width="1"/>
<line x1="91" y1="426.5" x2="95" y2="426.5" stroke="#333" stroke-width="1"/>
<line x1="91" y1="423.5" x2="95" y2="423.5" stroke="#333" stroke-width="1"/>
<line x1="91" y1="421.5" x2="95" y2="421.5" stroke="#333" stroke-width="1"/>
<text x="52.99" y="444.20" text-anchor="start" font-size="12" fill="#333333" textLength="13.35" lengthAdjust="spacing">10</text>
<text x="66.83" y="438.00" text-anchor="start" font-size="12" fill="#333333" textLength="15.17" lengthAdjust="spacing">−9</text>
<text x="45.40" y="466.20" text-anchor="start" font-size="12" fill="#333333" textLength="13.35" lengthAdjust="spacing">10</text>
<text x="59.25" y="460.00" text-anchor="start" font-size="12" fill="#333333" textLength="22.75" lengthAdjust="spacing">−10</text>
<text x="45.40" y="488.20" text-anchor="start" font-size="12" fill="#333333" textLength="13.35" lengthAdjust="spacing">10</text>
<text x="59.25" y="482.00" text-anchor="start" font-size="12" fill="#333333" textLength="22.75" lengthAdjust="spacing">−11</text>
<text x="45.40" y="510.20" text-anchor="start" font-size="12" fill="#333333" textLength="13.35" lengthAdjust="spacing">10</text>
<text x="59.25" y="504.00" text-anchor="start" font-size="12" fill="#333333" textLength="22.75" lengthAdjust="spacing">−12</text>
<text x="35.50" y="465.80" text-anchor="middle" font-size="12" fill="#333333" textLength="69.00" lengthAdjust="spacing" transform="rotate(-90 35.50 465.80)">P dyn/cm^2</text>
<line x1="1091" y1="426.90000000000003" x2="1103" y2="431.5" stroke="#0000ff" stroke-width="1.3" shape-rendering="geometricPrecision"/>
<text x="1107.80" y="433.10" text-anchor="start" font-size="12" fill="#333333" textLength="53.50" lengthAdjust="spacingAndGlyphs">CHEMS−P</text>
<line x1="1091" y1="442.05" x2="1103" y2="446.65" stroke="#ff0000" stroke-width="1.3" shape-rendering="geometricPrecision"/>
<text x="1107.80" y="448.25" text-anchor="start" font-size="12" fill="#333333" textLength="52.50" lengthAdjust="spacingAndGlyphs">LEMMS−P</text>
<line x1="1091" y1="457.20000000000005" x2="1103" y2="461.8" stroke="#00ff00" stroke-width="1.3" shape-rendering="geometricPrecision"/>
<text x="1107.80" y="463.40" text-anchor="start" font-size="12" fill="#333333" textLength="55.00" lengthAdjust="spacingAndGlyphs">CHEMS−O</text>
<text x="9.70" y="536.80" text-anchor="start" font-size="12" fill="#333333" textLength="65.50" lengthAdjust="spacingAndGlyphs">LEMMS Ions</text>
<line x1="91" y1="687.5" x2="95" y2="687.5" stroke="#333" stroke-width="1"/>
<line x1="91" y1="680.5" x2="95" y2="680.5" stroke="#333" stroke-width="1"/>
<line x1="91" y1="675.5" x2="95" y2="675.5" stroke="#333" stroke-width="1"/>
<line x1="91" y1="671.5" x2="95" y2="671.5" stroke="#333" stroke-width="1"/>
<line x1="91" y1="667.5" x2="95" y2="667.5" stroke="#333" stroke-width="1"/>
<line x1="91" y1="664.5" x2="95" y2="664.5" stroke="#333" stroke-width="1"/>
<line x1="91" y1="662.5" x2="95" y2="662.5" stroke="#333" stroke-width="1"/>
<line x1="87" y1="659.5" x2="95" y2="659.5" stroke="#333" stroke-width="1"/>
<line x1="91" y1="643.5" x2="95" y2="643.5" stroke="#333" stroke-width="1"/>
<line x1="91" y1="634.5" x2="95" y2="634.5" stroke="#333" stroke-width="1"/>
<line x1="91" y1="628.5" x2="95" y2="628.5" stroke="#333" stroke-width="1"/>
<line x1="91" y1="623.5" x2="95" y2="623.5" stroke="#333" stroke-width="1"/>
<line x1="91" y1="618.5" x2="95" y2="618.5" stroke="#333" stroke-width="1"/>
<line x1="91" y1="615.5" x2="95" y2="615.5" stroke="#333" stroke-width="1"/>
<line x1="91" y1="612.5" x2="95" y2="612.5" stroke="#333" stroke-width="1"/>
<line x1="91" y1="609.5" x2="95" y2="609.5" stroke="#333" stroke-width="1"/>
<line x1="87" y1="607.5" x2="95" y2="607.5" stroke="#333" stroke-width="1"/>
<line x1="91" y1="591.5" x2="95" y2="591.5" stroke="#333" stroke-width="1"/>
<line x1="91" y1="582.5" x2="95" y2="582.5" stroke="#333" stroke-width="1"/>
<line x1="91" y1="575.5" x2="95" y2="575.5" stroke="#333" stroke-width="1"/>
<line x1="91" y1="570.5" x2="95" y2="570.5" stroke="#333" stroke-width="1"/>
<line x1="91" y1="566.5" x2="95" y2="566.5" stroke="#333" stroke-width="1"/>
<line x1="91" y1="563.5" x2="95" y2="563.5" stroke="#333" stroke-width="1"/>
<line x1="91" y1="560.5" x2="95" y2="560.5" stroke="#333" stroke-width="1"/>
<line x1="91" y1="557.5" x2="95" y2="557.5" stroke="#333" stroke-width="1"/>
<line x1="87" y1="554.5" x2="95" y2="554.5" stroke="#333" stroke-width="1"/>
<line x1="91" y1="539.5" x2="95" y2="539.5" stroke="#333" stroke-width="1"/>
<line x1="91" y1="530.5" x2="95" y2="530.5" stroke="#333" stroke-width="1"/>
<line x1="91" y1="523.5" x2="95" y2="523.5" stroke="#333" stroke-width="1"/>
<line x1="91" y1="518.5" x2="95" y2="518.5" stroke="#333" stroke-width="1"/>
<line x1="91" y1="514.5" x2="95" y2="514.5" stroke="#333" stroke-width="1"/>
<text x="60.57" y="562.00" text-anchor="start" font-size="12" fill="#333333" textLength="13.35" lengthAdjust="spacing">10</text>
<text x="74.42" y="555.80" text-anchor="start" font-size="12" fill="#333333" textLength="7.58" lengthAdjust="spacing">4</text>
<text x="60.57" y="614.30" text-anchor="start" font-size="12" fill="#333333" textLength="13.35" lengthAdjust="spacing">10</text>
<text x="74.42" y="608.10" text-anchor="start" font-size="12" fill="#333333" textLength="7.58" lengthAdjust="spacing">3</text>
<text x="60.57" y="666.70" text-anchor="start" font-size="12" fill="#333333" textLength="13.35" lengthAdjust="spacing">10</text>
<text x="74.42" y="660.50" text-anchor="start" font-size="12" fill="#333333" textLength="7.58" lengthAdjust="spacing">2</text>
<text x="51.30" y="602.30" text-anchor="middle" font-size="12" fill="#333333" textLength="72.50" lengthAdjust="spacing" transform="rotate(-90 51.30 602.30)">Energy (keV)</text>
<rect x="1092" y="514.7" width="12.5" height="176.5" fill="url(#cmap)"/>
<line x1="1104.5" y1="513.7" x2="1104.5" y2="691.2" stroke="#333" stroke-width="1"/>
<line x1="1104" y1="515.5" x2="1113" y2="515.5" stroke="#333" stroke-width="1"/>
<text x="1118.00" y="522.10" text-anchor="start" font-size="12" fill="#333333" textLength="13.35" lengthAdjust="spacing">10</text>
<text x="1131.65" y="515.90" text-anchor="start" font-size="12" fill="#333333" textLength="7.58" lengthAdjust="spacing">4</text>
<line x1="1104" y1="534.5" x2="1109" y2="534.5" stroke="#333" stroke-width="1"/>
<line x1="1104" y1="554.5" x2="1113" y2="554.5" stroke="#333" stroke-width="1"/>
<text x="1118.00" y="561.25" text-anchor="start" font-size="12" fill="#333333" textLength="13.35" lengthAdjust="spacing">10</text>
<text x="1131.65" y="555.05" text-anchor="start" font-size="12" fill="#333333" textLength="7.58" lengthAdjust="spacing">2</text>
<line x1="1104" y1="573.5" x2="1109" y2="573.5" stroke="#333" stroke-width="1"/>
<line x1="1104" y1="593.5" x2="1113" y2="593.5" stroke="#333" stroke-width="1"/>
<text x="1118.00" y="600.40" text-anchor="start" font-size="12" fill="#333333" textLength="13.35" lengthAdjust="spacing">10</text>
<text x="1131.65" y="594.20" text-anchor="start" font-size="12" fill="#333333" textLength="7.58" lengthAdjust="spacing">0</text>
<line x1="1104" y1="613.5" x2="1109" y2="613.5" stroke="#333" stroke-width="1"/>
<line x1="1104" y1="632.5" x2="1113" y2="632.5" stroke="#333" stroke-width="1"/>
<text x="1118.00" y="639.55" text-anchor="start" font-size="12" fill="#333333" textLength="13.35" lengthAdjust="spacing">10</text>
<text x="1131.65" y="633.35" text-anchor="start" font-size="12" fill="#333333" textLength="15.17" lengthAdjust="spacing">−2</text>
<line x1="1104" y1="652.5" x2="1109" y2="652.5" stroke="#333" stroke-width="1"/>
<line x1="1104" y1="671.5" x2="1113" y2="671.5" stroke="#333" stroke-width="1"/>
<text x="1118.00" y="678.70" text-anchor="start" font-size="12" fill="#333333" textLength="13.35" lengthAdjust="spacing">10</text>
<text x="1131.65" y="672.50" text-anchor="start" font-size="12" fill="#333333" textLength="15.17" lengthAdjust="spacing">−4</text>
<line x1="1104" y1="691.5" x2="1109" y2="691.5" stroke="#333" stroke-width="1"/>
<text x="1157.50" y="602.00" text-anchor="middle" font-size="12" fill="#333333" textLength="167.50" lengthAdjust="spacing" transform="rotate(90 1157.50 602.00)">intensity 1/(s cm^2 ster keV)</text>
<line x1="95" y1="690.5" x2="1081" y2="690.5" stroke="#111" stroke-width="1"/>
<text x="79.00" y="706.20" text-anchor="end" font-size="12" fill="#333333" textLength="49.50" lengthAdjust="spacingAndGlyphs">Sunlight?</text>
<rect x="95" y="695" width="68.5" height="15.5" fill="#ff0000"/>
<rect x="163.5" y="695" width="439" height="15.5" fill="#00ff00"/>
<rect x="602.5" y="695" width="478" height="15.5" fill="#ff0000"/>
<rect x="95.5" y="695.5" width="985" height="15" fill="none" stroke="#222" stroke-width="1"/>
<line x1="163.5" y1="695" x2="163.5" y2="710.5" stroke="#222" stroke-width="1"/>
<line x1="602.5" y1="695" x2="602.5" y2="710.5" stroke="#222" stroke-width="1"/>
<line x1="136.5" y1="710.5" x2="136.5" y2="714.7" stroke="#333" stroke-width="1"/>
<line x1="177.5" y1="710.5" x2="177.5" y2="714.7" stroke="#333" stroke-width="1"/>
<line x1="218.5" y1="710.5" x2="218.5" y2="718.7" stroke="#333" stroke-width="1"/>
<line x1="259.5" y1="710.5" x2="259.5" y2="714.7" stroke="#333" stroke-width="1"/>
<line x1="300.5" y1="710.5" x2="300.5" y2="714.7" stroke="#333" stroke-width="1"/>
<line x1="341.5" y1="710.5" x2="341.5" y2="718.7" stroke="#333" stroke-width="1"/>
<line x1="382.5" y1="710.5" x2="382.5" y2="714.7" stroke="#333" stroke-width="1"/>
<line x1="424.5" y1="710.5" x2="424.5" y2="714.7" stroke="#333" stroke-width="1"/>
<line x1="465.5" y1="710.5" x2="465.5" y2="718.7" stroke="#333" stroke-width="1"/>
<line x1="506.5" y1="710.5" x2="506.5" y2="714.7" stroke="#333" stroke-width="1"/>
<line x1="547.5" y1="710.5" x2="547.5" y2="714.7" stroke="#333" stroke-width="1"/>
<line x1="588.5" y1="710.5" x2="588.5" y2="718.7" stroke="#333" stroke-width="1"/>
<line x1="629.5" y1="710.5" x2="629.5" y2="714.7" stroke="#333" stroke-width="1"/>
<line x1="670.5" y1="710.5" x2="670.5" y2="714.7" stroke="#333" stroke-width="1"/>
<line x1="711.5" y1="710.5" x2="711.5" y2="718.7" stroke="#333" stroke-width="1"/>
<line x1="752.5" y1="710.5" x2="752.5" y2="714.7" stroke="#333" stroke-width="1"/>
<line x1="793.5" y1="710.5" x2="793.5" y2="714.7" stroke="#333" stroke-width="1"/>
<line x1="834.5" y1="710.5" x2="834.5" y2="718.7" stroke="#333" stroke-width="1"/>
<line x1="875.5" y1="710.5" x2="875.5" y2="714.7" stroke="#333" stroke-width="1"/>
<line x1="916.5" y1="710.5" x2="916.5" y2="714.7" stroke="#333" stroke-width="1"/>
<line x1="957.5" y1="710.5" x2="957.5" y2="718.7" stroke="#333" stroke-width="1"/>
<line x1="998.5" y1="710.5" x2="998.5" y2="714.7" stroke="#333" stroke-width="1"/>
<line x1="1039.5" y1="710.5" x2="1039.5" y2="714.7" stroke="#333" stroke-width="1"/>
<line x1="1080.5" y1="710.5" x2="1080.5" y2="718.7" stroke="#333" stroke-width="1"/>
<text x="218.19" y="733.70" text-anchor="middle" font-size="12" fill="#333333" textLength="34.13" lengthAdjust="spacing">03:00</text>
<text x="235.19" y="748.70" text-anchor="end" font-size="12" fill="#333333" textLength="26.54" lengthAdjust="spacing">6.11</text>
<text x="235.19" y="763.70" text-anchor="end" font-size="12" fill="#333333" textLength="34.13" lengthAdjust="spacing">54.60</text>
<text x="235.19" y="778.70" text-anchor="end" font-size="12" fill="#333333" textLength="41.71" lengthAdjust="spacing">196.95</text>
<text x="341.38" y="733.70" text-anchor="middle" font-size="12" fill="#333333" textLength="34.13" lengthAdjust="spacing">06:00</text>
<text x="358.38" y="748.70" text-anchor="end" font-size="12" fill="#333333" textLength="26.54" lengthAdjust="spacing">6.16</text>
<text x="358.38" y="763.70" text-anchor="end" font-size="12" fill="#333333" textLength="34.13" lengthAdjust="spacing">54.74</text>
<text x="358.38" y="778.70" text-anchor="end" font-size="12" fill="#333333" textLength="41.71" lengthAdjust="spacing">196.19</text>
<text x="464.56" y="733.70" text-anchor="middle" font-size="12" fill="#333333" textLength="34.13" lengthAdjust="spacing">09:00</text>
<text x="481.56" y="748.70" text-anchor="end" font-size="12" fill="#333333" textLength="26.54" lengthAdjust="spacing">6.20</text>
<text x="481.56" y="763.70" text-anchor="end" font-size="12" fill="#333333" textLength="34.13" lengthAdjust="spacing">54.88</text>
<text x="481.56" y="778.70" text-anchor="end" font-size="12" fill="#333333" textLength="41.71" lengthAdjust="spacing">195.38</text>
<text x="587.75" y="733.70" text-anchor="middle" font-size="12" fill="#333333" textLength="34.13" lengthAdjust="spacing">12:00</text>
<text x="604.75" y="748.70" text-anchor="end" font-size="12" fill="#333333" textLength="26.54" lengthAdjust="spacing">6.25</text>
<text x="604.75" y="763.70" text-anchor="end" font-size="12" fill="#333333" textLength="34.13" lengthAdjust="spacing">55.01</text>
<text x="604.75" y="778.70" text-anchor="end" font-size="12" fill="#333333" textLength="41.71" lengthAdjust="spacing">194.52</text>
<text x="710.94" y="733.70" text-anchor="middle" font-size="12" fill="#333333" textLength="34.13" lengthAdjust="spacing">15:00</text>
<text x="727.94" y="748.70" text-anchor="end" font-size="12" fill="#333333" textLength="26.54" lengthAdjust="spacing">6.29</text>
<text x="727.94" y="763.70" text-anchor="end" font-size="12" fill="#333333" textLength="34.13" lengthAdjust="spacing">55.14</text>
<text x="727.94" y="778.70" text-anchor="end" font-size="12" fill="#333333" textLength="41.71" lengthAdjust="spacing">193.63</text>
<text x="834.12" y="733.70" text-anchor="middle" font-size="12" fill="#333333" textLength="34.13" lengthAdjust="spacing">18:00</text>
<text x="851.12" y="748.70" text-anchor="end" font-size="12" fill="#333333" textLength="26.54" lengthAdjust="spacing">6.34</text>
<text x="851.12" y="763.70" text-anchor="end" font-size="12" fill="#333333" textLength="34.13" lengthAdjust="spacing">55.27</text>
<text x="851.12" y="778.70" text-anchor="end" font-size="12" fill="#333333" textLength="41.71" lengthAdjust="spacing">192.71</text>
<text x="957.31" y="733.70" text-anchor="middle" font-size="12" fill="#333333" textLength="34.13" lengthAdjust="spacing">21:00</text>
<text x="974.31" y="748.70" text-anchor="end" font-size="12" fill="#333333" textLength="26.54" lengthAdjust="spacing">6.38</text>
<text x="974.31" y="763.70" text-anchor="end" font-size="12" fill="#333333" textLength="34.13" lengthAdjust="spacing">55.39</text>
<text x="974.31" y="778.70" text-anchor="end" font-size="12" fill="#333333" textLength="41.71" lengthAdjust="spacing">191.74</text>
<text x="1080.50" y="733.70" text-anchor="middle" font-size="12" fill="#333333" textLength="34.13" lengthAdjust="spacing">00:00</text>
<text x="1097.50" y="748.70" text-anchor="end" font-size="12" fill="#333333" textLength="26.54" lengthAdjust="spacing">6.43</text>
<text x="1097.50" y="763.70" text-anchor="end" font-size="12" fill="#333333" textLength="34.13" lengthAdjust="spacing">55.51</text>
<text x="1097.50" y="778.70" text-anchor="end" font-size="12" fill="#333333" textLength="41.71" lengthAdjust="spacing">190.75</text>
<text x="1062.50" y="745.70" text-anchor="start" font-size="12" fill="#333333" textLength="61.50" lengthAdjust="spacing">2014−114</text>
<text x="59.50" y="748.70" text-anchor="end" font-size="12" fill="#333333" textLength="43.50" lengthAdjust="spacing">LT (hrs)</text>
<text x="59.50" y="763.70" text-anchor="end" font-size="12" fill="#333333" textLength="13.50" lengthAdjust="spacingAndGlyphs">Rs</text>
<text x="59.50" y="778.70" text-anchor="end" font-size="12" fill="#333333" textLength="46.00" lengthAdjust="spacing">Dipole L</text>
<line x1="136.5" y1="218" x2="136.5" y2="221" stroke="#666" stroke-width="1"/>
<line x1="136.5" y1="413.5" x2="136.5" y2="416.5" stroke="#666" stroke-width="1"/>
<line x1="136.5" y1="506.5" x2="136.5" y2="509.5" stroke="#333" stroke-width="1"/>
<line x1="136.5" y1="688" x2="136.5" y2="691" stroke="#666" stroke-width="1"/>
<line x1="177.5" y1="218" x2="177.5" y2="221" stroke="#666" stroke-width="1"/>
<line x1="177.5" y1="413.5" x2="177.5" y2="416.5" stroke="#666" stroke-width="1"/>
<line x1="177.5" y1="506.5" x2="177.5" y2="509.5" stroke="#333" stroke-width="1"/>
<line x1="177.5" y1="688" x2="177.5" y2="691" stroke="#666" stroke-width="1"/>
<line x1="218.5" y1="218" x2="218.5" y2="221" stroke="#666" stroke-width="1"/>
<line x1="218.5" y1="413.5" x2="218.5" y2="416.5" stroke="#666" stroke-width="1"/>
<line x1="218.5" y1="506.5" x2="218.5" y2="509.5" stroke="#333" stroke-width="1"/>
<line x1="218.5" y1="688" x2="218.5" y2="691" stroke="#666" stroke-width="1"/>
<line x1="259.5" y1="218" x2="259.5" y2="221" stroke="#666" stroke-width="1"/>
<line x1="259.5" y1="413.5" x2="259.5" y2="416.5" stroke="#666" stroke-width="1"/>
<line x1="259.5" y1="506.5" x2="259.5" y2="509.5" stroke="#333" stroke-width="1"/>
<line x1="259.5" y1="688" x2="259.5" y2="691" stroke="#666" stroke-width="1"/>
<line x1="300.5" y1="218" x2="300.5" y2="221" stroke="#666" stroke-width="1"/>
<line x1="300.5" y1="413.5" x2="300.5" y2="416.5" stroke="#666" stroke-width="1"/>
<line x1="300.5" y1="506.5" x2="300.5" y2="509.5" stroke="#333" stroke-width="1"/>
<line x1="300.5" y1="688" x2="300.5" y2="691" stroke="#666" stroke-width="1"/>
<line x1="341.5" y1="218" x2="341.5" y2="221" stroke="#666" stroke-width="1"/>
<line x1="341.5" y1="413.5" x2="341.5" y2="416.5" stroke="#666" stroke-width="1"/>
<line x1="341.5" y1="506.5" x2="341.5" y2="509.5" stroke="#333" stroke-width="1"/>
<line x1="341.5" y1="688" x2="341.5" y2="691" stroke="#666" stroke-width="1"/>
<line x1="382.5" y1="218" x2="382.5" y2="221" stroke="#666" stroke-width="1"/>
<line x1="382.5" y1="413.5" x2="382.5" y2="416.5" stroke="#666" stroke-width="1"/>
<line x1="382.5" y1="506.5" x2="382.5" y2="509.5" stroke="#333" stroke-width="1"/>
<line x1="382.5" y1="688" x2="382.5" y2="691" stroke="#666" stroke-width="1"/>
<line x1="424.5" y1="218" x2="424.5" y2="221" stroke="#666" stroke-width="1"/>
<line x1="424.5" y1="413.5" x2="424.5" y2="416.5" stroke="#666" stroke-width="1"/>
<line x1="424.5" y1="506.5" x2="424.5" y2="509.5" stroke="#333" stroke-width="1"/>
<line x1="424.5" y1="688" x2="424.5" y2="691" stroke="#666" stroke-width="1"/>
<line x1="465.5" y1="218" x2="465.5" y2="221" stroke="#666" stroke-width="1"/>
<line x1="465.5" y1="413.5" x2="465.5" y2="416.5" stroke="#666" stroke-width="1"/>
<line x1="465.5" y1="506.5" x2="465.5" y2="509.5" stroke="#333" stroke-width="1"/>
<line x1="465.5" y1="688" x2="465.5" y2="691" stroke="#666" stroke-width="1"/>
<line x1="506.5" y1="218" x2="506.5" y2="221" stroke="#666" stroke-width="1"/>
<line x1="506.5" y1="413.5" x2="506.5" y2="416.5" stroke="#666" stroke-width="1"/>
<line x1="506.5" y1="506.5" x2="506.5" y2="509.5" stroke="#333" stroke-width="1"/>
<line x1="506.5" y1="688" x2="506.5" y2="691" stroke="#666" stroke-width="1"/>
<line x1="547.5" y1="218" x2="547.5" y2="221" stroke="#666" stroke-width="1"/>
<line x1="547.5" y1="413.5" x2="547.5" y2="416.5" stroke="#666" stroke-width="1"/>
<line x1="547.5" y1="506.5" x2="547.5" y2="509.5" stroke="#333" stroke-width="1"/>
<line x1="547.5" y1="688" x2="547.5" y2="691" stroke="#666" stroke-width="1"/>
<line x1="588.5" y1="218" x2="588.5" y2="221" stroke="#666" stroke-width="1"/>
<line x1="588.5" y1="413.5" x2="588.5" y2="416.5" stroke="#666" stroke-width="1"/>
<line x1="588.5" y1="506.5" x2="588.5" y2="509.5" stroke="#333" stroke-width="1"/>
<line x1="588.5" y1="688" x2="588.5" y2="691" stroke="#666" stroke-width="1"/>
<line x1="629.5" y1="218" x2="629.5" y2="221" stroke="#666" stroke-width="1"/>
<line x1="629.5" y1="413.5" x2="629.5" y2="416.5" stroke="#666" stroke-width="1"/>
<line x1="629.5" y1="506.5" x2="629.5" y2="509.5" stroke="#333" stroke-width="1"/>
<line x1="629.5" y1="688" x2="629.5" y2="691" stroke="#666" stroke-width="1"/>
<line x1="670.5" y1="218" x2="670.5" y2="221" stroke="#666" stroke-width="1"/>
<line x1="670.5" y1="413.5" x2="670.5" y2="416.5" stroke="#666" stroke-width="1"/>
<line x1="670.5" y1="506.5" x2="670.5" y2="509.5" stroke="#333" stroke-width="1"/>
<line x1="670.5" y1="688" x2="670.5" y2="691" stroke="#666" stroke-width="1"/>
<line x1="711.5" y1="218" x2="711.5" y2="221" stroke="#666" stroke-width="1"/>
<line x1="711.5" y1="413.5" x2="711.5" y2="416.5" stroke="#666" stroke-width="1"/>
<line x1="711.5" y1="506.5" x2="711.5" y2="509.5" stroke="#333" stroke-width="1"/>
<line x1="711.5" y1="688" x2="711.5" y2="691" stroke="#666" stroke-width="1"/>
<line x1="752.5" y1="218" x2="752.5" y2="221" stroke="#666" stroke-width="1"/>
<line x1="752.5" y1="413.5" x2="752.5" y2="416.5" stroke="#666" stroke-width="1"/>
<line x1="752.5" y1="506.5" x2="752.5" y2="509.5" stroke="#333" stroke-width="1"/>
<line x1="752.5" y1="688" x2="752.5" y2="691" stroke="#666" stroke-width="1"/>
<line x1="793.5" y1="218" x2="793.5" y2="221" stroke="#666" stroke-width="1"/>
<line x1="793.5" y1="413.5" x2="793.5" y2="416.5" stroke="#666" stroke-width="1"/>
<line x1="793.5" y1="506.5" x2="793.5" y2="509.5" stroke="#333" stroke-width="1"/>
<line x1="793.5" y1="688" x2="793.5" y2="691" stroke="#666" stroke-width="1"/>
<line x1="834.5" y1="218" x2="834.5" y2="221" stroke="#666" stroke-width="1"/>
<line x1="834.5" y1="413.5" x2="834.5" y2="416.5" stroke="#666" stroke-width="1"/>
<line x1="834.5" y1="506.5" x2="834.5" y2="509.5" stroke="#333" stroke-width="1"/>
<line x1="834.5" y1="688" x2="834.5" y2="691" stroke="#666" stroke-width="1"/>
<line x1="875.5" y1="218" x2="875.5" y2="221" stroke="#666" stroke-width="1"/>
<line x1="875.5" y1="413.5" x2="875.5" y2="416.5" stroke="#666" stroke-width="1"/>
<line x1="875.5" y1="506.5" x2="875.5" y2="509.5" stroke="#333" stroke-width="1"/>
<line x1="875.5" y1="688" x2="875.5" y2="691" stroke="#666" stroke-width="1"/>
<line x1="916.5" y1="218" x2="916.5" y2="221" stroke="#666" stroke-width="1"/>
<line x1="916.5" y1="413.5" x2="916.5" y2="416.5" stroke="#666" stroke-width="1"/>
<line x1="916.5" y1="506.5" x2="916.5" y2="509.5" stroke="#333" stroke-width="1"/>
<line x1="916.5" y1="688" x2="916.5" y2="691" stroke="#666" stroke-width="1"/>
<line x1="957.5" y1="218" x2="957.5" y2="221" stroke="#666" stroke-width="1"/>
<line x1="957.5" y1="413.5" x2="957.5" y2="416.5" stroke="#666" stroke-width="1"/>
<line x1="957.5" y1="506.5" x2="957.5" y2="509.5" stroke="#333" stroke-width="1"/>
<line x1="957.5" y1="688" x2="957.5" y2="691" stroke="#666" stroke-width="1"/>
<line x1="998.5" y1="218" x2="998.5" y2="221" stroke="#666" stroke-width="1"/>
<line x1="998.5" y1="413.5" x2="998.5" y2="416.5" stroke="#666" stroke-width="1"/>
<line x1="998.5" y1="506.5" x2="998.5" y2="509.5" stroke="#333" stroke-width="1"/>
<line x1="998.5" y1="688" x2="998.5" y2="691" stroke="#666" stroke-width="1"/>
<line x1="1039.5" y1="218" x2="1039.5" y2="221" stroke="#666" stroke-width="1"/>
<line x1="1039.5" y1="413.5" x2="1039.5" y2="416.5" stroke="#666" stroke-width="1"/>
<line x1="1039.5" y1="506.5" x2="1039.5" y2="509.5" stroke="#333" stroke-width="1"/>
<line x1="1039.5" y1="688" x2="1039.5" y2="691" stroke="#666" stroke-width="1"/>
<g shape-rendering="geometricPrecision">
<clipPath id="c1"><rect x="215.5" y="802.5" width="151.0" height="148.0"/></clipPath>
<g clip-path="url(#c1)">
<path d="M303.00 796.60 C302.03 797.63 299.70 800.37 297.20 802.80 C294.70 805.23 291.13 808.33 288.00 811.20 C284.87 814.07 281.47 816.93 278.40 820.00 C275.33 823.07 272.27 826.27 269.60 829.60 C266.93 832.93 264.40 836.67 262.40 840.00 C260.40 843.33 258.93 846.13 257.60 849.60 C256.27 853.07 255.13 857.07 254.40 860.80 C253.67 864.53 253.43 869.37 253.20 872.00 C252.97 874.63 253.00 875.07 253.00 876.60 C253.00 878.13 252.97 878.57 253.20 881.20 C253.43 883.83 253.67 888.67 254.40 892.40 C255.13 896.13 256.27 900.13 257.60 903.60 C258.93 907.07 260.40 909.87 262.40 913.20 C264.40 916.53 266.93 920.27 269.60 923.60 C272.27 926.93 275.33 930.13 278.40 933.20 C281.47 936.27 284.87 939.13 288.00 942.00 C291.13 944.87 294.70 947.97 297.20 950.40 C299.70 952.83 302.03 955.57 303.00 956.60" fill="none" stroke="#1a2cf0" stroke-width="1.1" stroke-dasharray="2.2 1.2"/>
<path d="M362.00 798.60 C360.63 799.30 360.80 800.10 353.80 802.80 C346.80 805.50 327.63 811.80 320.00 814.80 C312.37 817.80 312.00 818.73 308.00 820.80 C304.00 822.87 299.07 825.20 296.00 827.20 C292.93 829.20 291.87 831.07 289.60 832.80 C287.33 834.53 285.07 835.33 282.40 837.60 C279.73 839.87 276.00 843.47 273.60 846.40 C271.20 849.33 269.60 852.00 268.00 855.20 C266.40 858.40 264.80 862.03 264.00 865.60 C263.20 869.17 263.20 872.93 263.20 876.60 C263.20 880.27 263.20 884.03 264.00 887.60 C264.80 891.17 266.40 894.80 268.00 898.00 C269.60 901.20 271.20 903.87 273.60 906.80 C276.00 909.73 279.73 913.33 282.40 915.60 C285.07 917.87 287.33 918.67 289.60 920.40 C291.87 922.13 292.93 924.00 296.00 926.00 C299.07 928.00 304.00 930.33 308.00 932.40 C312.00 934.47 312.37 935.40 320.00 938.40 C327.63 941.40 346.80 947.70 353.80 950.40 C360.80 953.10 360.63 953.90 362.00 954.60" fill="none" stroke="#7a4b22" stroke-width="1.1" stroke-dasharray="2.2 1.2"/>
</g>
<ellipse cx="291.2" cy="877.0" rx="20.1" ry="20.6" fill="none" stroke="#000" stroke-width="1.5"/>
<path d="M291.59999999999997 874.6 L293.2 876.6 L291.59999999999997 878.6 L290.0 876.6 Z" fill="none" stroke="#000" stroke-width="0.9"/>
<circle cx="271.6" cy="877.1" r="2.7" fill="#ff0000"/>
<path d="M276.00 831.40 C276.83 831.50 279.50 831.67 281.00 832.00 C282.50 832.33 283.50 832.87 285.00 833.40 C286.50 833.93 288.17 834.37 290.00 835.20 C291.83 836.03 293.73 837.00 296.00 838.40 C298.27 839.80 302.33 842.73 303.60 843.60" fill="none" stroke="#000" stroke-width="1.5"/>
<ellipse cx="289.4" cy="834.2" rx="3.4" ry="2.7" fill="#0000ff"/>
<path d="M285.90 829.90 L294.90 838.90" fill="none" stroke="#ff2020" stroke-width="1.2"/>
<path d="M285.90 838.90 L294.90 829.90" fill="none" stroke="#ff2020" stroke-width="1.2"/>
<rect x="215.5" y="802.5" width="151.0" height="148.0" fill="none" stroke="#333" stroke-width="1"/>
<line x1="211.0" y1="803.5" x2="215.5" y2="803.5" stroke="#333" stroke-width="1"/>
<line x1="207.5" y1="814.5" x2="215.5" y2="814.5" stroke="#333" stroke-width="1"/>
<text x="204.00" y="818.80" text-anchor="end" font-size="12" fill="#333333" textLength="26.54" lengthAdjust="spacing">−60.</text>
<line x1="211.0" y1="824.5" x2="215.5" y2="824.5" stroke="#333" stroke-width="1"/>
<line x1="207.5" y1="835.5" x2="215.5" y2="835.5" stroke="#333" stroke-width="1"/>
<text x="204.00" y="839.80" text-anchor="end" font-size="12" fill="#333333" textLength="26.54" lengthAdjust="spacing">−40.</text>
<line x1="211.0" y1="845.5" x2="215.5" y2="845.5" stroke="#333" stroke-width="1"/>
<line x1="207.5" y1="856.5" x2="215.5" y2="856.5" stroke="#333" stroke-width="1"/>
<text x="204.00" y="860.80" text-anchor="end" font-size="12" fill="#333333" textLength="26.54" lengthAdjust="spacing">−20.</text>
<line x1="211.0" y1="866.5" x2="215.5" y2="866.5" stroke="#333" stroke-width="1"/>
<line x1="207.5" y1="877.5" x2="215.5" y2="877.5" stroke="#333" stroke-width="1"/>
<text x="204.00" y="881.80" text-anchor="end" font-size="12" fill="#333333" textLength="11.38" lengthAdjust="spacing">0.</text>
<line x1="211.0" y1="887.5" x2="215.5" y2="887.5" stroke="#333" stroke-width="1"/>
<line x1="207.5" y1="898.5" x2="215.5" y2="898.5" stroke="#333" stroke-width="1"/>
<text x="204.00" y="902.80" text-anchor="end" font-size="12" fill="#333333" textLength="18.96" lengthAdjust="spacing">20.</text>
<line x1="211.0" y1="908.5" x2="215.5" y2="908.5" stroke="#333" stroke-width="1"/>
<line x1="207.5" y1="919.5" x2="215.5" y2="919.5" stroke="#333" stroke-width="1"/>
<text x="204.00" y="923.80" text-anchor="end" font-size="12" fill="#333333" textLength="18.96" lengthAdjust="spacing">40.</text>
<line x1="211.0" y1="929.5" x2="215.5" y2="929.5" stroke="#333" stroke-width="1"/>
<line x1="207.5" y1="940.5" x2="215.5" y2="940.5" stroke="#333" stroke-width="1"/>
<text x="204.00" y="944.80" text-anchor="end" font-size="12" fill="#333333" textLength="18.96" lengthAdjust="spacing">60.</text>
<line x1="211.0" y1="950.5" x2="215.5" y2="950.5" stroke="#333" stroke-width="1"/>
<line x1="366.5" y1="950.5" x2="366.5" y2="955.5" stroke="#333" stroke-width="1"/>
<line x1="355.5" y1="950.5" x2="355.5" y2="955.5" stroke="#333" stroke-width="1"/>
<line x1="345.5" y1="950.5" x2="345.5" y2="959.0" stroke="#333" stroke-width="1"/>
<text x="346.00" y="973.50" text-anchor="middle" font-size="12" fill="#333333" textLength="26.54" lengthAdjust="spacing">−50.</text>
<line x1="334.5" y1="950.5" x2="334.5" y2="955.5" stroke="#333" stroke-width="1"/>
<line x1="323.5" y1="950.5" x2="323.5" y2="955.5" stroke="#333" stroke-width="1"/>
<line x1="313.5" y1="950.5" x2="313.5" y2="955.5" stroke="#333" stroke-width="1"/>
<line x1="302.5" y1="950.5" x2="302.5" y2="955.5" stroke="#333" stroke-width="1"/>
<line x1="291.5" y1="950.5" x2="291.5" y2="959.0" stroke="#333" stroke-width="1"/>
<text x="292.00" y="973.50" text-anchor="middle" font-size="12" fill="#333333" textLength="11.38" lengthAdjust="spacing">0.</text>
<line x1="280.5" y1="950.5" x2="280.5" y2="955.5" stroke="#333" stroke-width="1"/>
<line x1="270.5" y1="950.5" x2="270.5" y2="955.5" stroke="#333" stroke-width="1"/>
<line x1="259.5" y1="950.5" x2="259.5" y2="955.5" stroke="#333" stroke-width="1"/>
<line x1="248.5" y1="950.5" x2="248.5" y2="955.5" stroke="#333" stroke-width="1"/>
<line x1="238.5" y1="950.5" x2="238.5" y2="959.0" stroke="#333" stroke-width="1"/>
<text x="239.00" y="973.50" text-anchor="middle" font-size="12" fill="#333333" textLength="18.96" lengthAdjust="spacing">50.</text>
<line x1="227.5" y1="950.5" x2="227.5" y2="955.5" stroke="#333" stroke-width="1"/>
<line x1="216.5" y1="950.5" x2="216.5" y2="955.5" stroke="#333" stroke-width="1"/>
<text x="291.00" y="992.00" text-anchor="middle" font-size="12" fill="#333333" textLength="37.50" lengthAdjust="spacingAndGlyphs">KSM−X</text>
<text x="167.30" y="877.00" text-anchor="middle" font-size="12" fill="#333333" textLength="37.00" lengthAdjust="spacingAndGlyphs" transform="rotate(-90 167.30 877.00)">KSM−Y</text>
<clipPath id="c2"><rect x="509.5" y="802.5" width="151.0" height="148.0"/></clipPath>
<g clip-path="url(#c2)">
<path d="M543.00 797.00 C543.00 797.93 545.12 798.17 543.00 802.60 C540.88 807.03 533.63 816.95 530.30 823.60 C526.97 830.25 524.75 836.55 523.00 842.50 C521.25 848.45 520.40 853.62 519.80 859.30 C519.20 864.98 519.22 870.65 519.40 876.60 C519.58 882.55 519.78 888.43 520.90 895.00 C522.02 901.57 523.83 909.00 526.10 916.00 C528.37 923.00 531.80 931.33 534.50 937.00 C537.20 942.67 540.55 947.00 542.30 950.00 C544.05 953.00 544.55 954.17 545.00 955.00" fill="none" stroke="#1a2cf0" stroke-width="1.1" stroke-dasharray="2.2 1.2"/>
<path d="M579.00 797.00 C578.60 797.93 578.77 799.57 576.60 802.60 C574.43 805.63 570.57 809.95 566.00 815.20 C561.43 820.45 553.40 828.50 549.20 834.10 C545.00 839.70 542.83 843.55 540.80 848.80 C538.77 854.05 537.77 860.97 537.00 865.60 C536.23 870.23 536.08 871.70 536.20 876.60 C536.32 881.50 536.23 888.43 537.70 895.00 C539.17 901.57 541.68 909.00 545.00 916.00 C548.32 923.00 552.17 931.33 557.60 937.00 C563.03 942.67 573.70 947.00 577.60 950.00 C581.50 953.00 580.43 954.17 581.00 955.00" fill="none" stroke="#7a4b22" stroke-width="1.1" stroke-dasharray="2.2 1.2"/>
</g>
<path d="M550.30 890.40 L621.70 863.50" fill="none" stroke="#000" stroke-width="1.5"/>
<path d="M585.2 875.0 L588.2 876.0 L585.2 878.0 L582.2 877.0 Z" fill="none" stroke="#000" stroke-width="0.9"/>
<circle cx="550.3" cy="890.4" r="2.7" fill="#ff0000"/>
<path d="M558.70 813.50 C559.92 813.02 563.28 811.42 566.00 810.60 C568.72 809.78 571.83 809.02 575.00 808.60 C578.17 808.18 581.67 807.93 585.00 808.10 C588.33 808.27 591.50 808.35 595.00 809.60 C598.50 810.85 604.17 814.60 606.00 815.60" fill="none" stroke="#000" stroke-width="1.5"/>
<ellipse cx="581" cy="809.3" rx="3.6" ry="2.7" fill="#0000ff"/>
<ellipse cx="585" cy="809.3" rx="2.4" ry="2.4" fill="#0000ff"/>
<path d="M580.00 804.80 L589.00 813.80" fill="none" stroke="#ff2020" stroke-width="1.2"/>
<path d="M580.00 813.80 L589.00 804.80" fill="none" stroke="#ff2020" stroke-width="1.2"/>
<rect x="509.5" y="802.5" width="151.0" height="148.0" fill="none" stroke="#333" stroke-width="1"/>
<line x1="501.0" y1="951.5" x2="509.5" y2="951.5" stroke="#333" stroke-width="1"/>
<text x="495.50" y="956.10" text-anchor="end" font-size="12" fill="#333333" textLength="26.54" lengthAdjust="spacing">−40.</text>
<line x1="505.0" y1="948.90" x2="509.5" y2="948.90" stroke="#333" stroke-width="0.9" shape-rendering="crispEdges"/>
<line x1="505.0" y1="947.05" x2="509.5" y2="947.05" stroke="#333" stroke-width="0.9" shape-rendering="crispEdges"/>
<line x1="505.0" y1="945.20" x2="509.5" y2="945.20" stroke="#333" stroke-width="0.9" shape-rendering="crispEdges"/>
<line x1="505.0" y1="943.35" x2="509.5" y2="943.35" stroke="#333" stroke-width="0.9" shape-rendering="crispEdges"/>
<line x1="505.0" y1="941.51" x2="509.5" y2="941.51" stroke="#333" stroke-width="0.9" shape-rendering="crispEdges"/>
<line x1="505.0" y1="939.66" x2="509.5" y2="939.66" stroke="#333" stroke-width="0.9" shape-rendering="crispEdges"/>
<line x1="505.0" y1="937.81" x2="509.5" y2="937.81" stroke="#333" stroke-width="0.9" shape-rendering="crispEdges"/>
<line x1="505.0" y1="935.96" x2="509.5" y2="935.96" stroke="#333" stroke-width="0.9" shape-rendering="crispEdges"/>
<line x1="505.0" y1="934.11" x2="509.5" y2="934.11" stroke="#333" stroke-width="0.9" shape-rendering="crispEdges"/>
<line x1="501.0" y1="932.5" x2="509.5" y2="932.5" stroke="#333" stroke-width="1"/>
<text x="495.50" y="937.10" text-anchor="end" font-size="12" fill="#333333" textLength="26.54" lengthAdjust="spacing">−30.</text>
<line x1="505.0" y1="930.41" x2="509.5" y2="930.41" stroke="#333" stroke-width="0.9" shape-rendering="crispEdges"/>
<line x1="505.0" y1="928.56" x2="509.5" y2="928.56" stroke="#333" stroke-width="0.9" shape-rendering="crispEdges"/>
<line x1="505.0" y1="926.72" x2="509.5" y2="926.72" stroke="#333" stroke-width="0.9" shape-rendering="crispEdges"/>
<line x1="505.0" y1="924.87" x2="509.5" y2="924.87" stroke="#333" stroke-width="0.9" shape-rendering="crispEdges"/>
<line x1="505.0" y1="923.02" x2="509.5" y2="923.02" stroke="#333" stroke-width="0.9" shape-rendering="crispEdges"/>
<line x1="505.0" y1="921.17" x2="509.5" y2="921.17" stroke="#333" stroke-width="0.9" shape-rendering="crispEdges"/>
<line x1="505.0" y1="919.32" x2="509.5" y2="919.32" stroke="#333" stroke-width="0.9" shape-rendering="crispEdges"/>
<line x1="505.0" y1="917.47" x2="509.5" y2="917.47" stroke="#333" stroke-width="0.9" shape-rendering="crispEdges"/>
<line x1="505.0" y1="915.62" x2="509.5" y2="915.62" stroke="#333" stroke-width="0.9" shape-rendering="crispEdges"/>
<line x1="501.0" y1="914.5" x2="509.5" y2="914.5" stroke="#333" stroke-width="1"/>
<text x="495.50" y="919.10" text-anchor="end" font-size="12" fill="#333333" textLength="26.54" lengthAdjust="spacing">−20.</text>
<line x1="505.0" y1="911.93" x2="509.5" y2="911.93" stroke="#333" stroke-width="0.9" shape-rendering="crispEdges"/>
<line x1="505.0" y1="910.08" x2="509.5" y2="910.08" stroke="#333" stroke-width="0.9" shape-rendering="crispEdges"/>
<line x1="505.0" y1="908.23" x2="509.5" y2="908.23" stroke="#333" stroke-width="0.9" shape-rendering="crispEdges"/>
<line x1="505.0" y1="906.38" x2="509.5" y2="906.38" stroke="#333" stroke-width="0.9" shape-rendering="crispEdges"/>
<line x1="505.0" y1="904.53" x2="509.5" y2="904.53" stroke="#333" stroke-width="0.9" shape-rendering="crispEdges"/>
<line x1="505.0" y1="902.68" x2="509.5" y2="902.68" stroke="#333" stroke-width="0.9" shape-rendering="crispEdges"/>
<line x1="505.0" y1="900.83" x2="509.5" y2="900.83" stroke="#333" stroke-width="0.9" shape-rendering="crispEdges"/>
<line x1="505.0" y1="898.98" x2="509.5" y2="898.98" stroke="#333" stroke-width="0.9" shape-rendering="crispEdges"/>
<line x1="505.0" y1="897.14" x2="509.5" y2="897.14" stroke="#333" stroke-width="0.9" shape-rendering="crispEdges"/>
<line x1="501.0" y1="895.5" x2="509.5" y2="895.5" stroke="#333" stroke-width="1"/>
<text x="495.50" y="900.10" text-anchor="end" font-size="12" fill="#333333" textLength="26.54" lengthAdjust="spacing">−10.</text>
<line x1="505.0" y1="893.44" x2="509.5" y2="893.44" stroke="#333" stroke-width="0.9" shape-rendering="crispEdges"/>
<line x1="505.0" y1="891.59" x2="509.5" y2="891.59" stroke="#333" stroke-width="0.9" shape-rendering="crispEdges"/>
<line x1="505.0" y1="889.74" x2="509.5" y2="889.74" stroke="#333" stroke-width="0.9" shape-rendering="crispEdges"/>
<line x1="505.0" y1="887.89" x2="509.5" y2="887.89" stroke="#333" stroke-width="0.9" shape-rendering="crispEdges"/>
<line x1="505.0" y1="886.04" x2="509.5" y2="886.04" stroke="#333" stroke-width="0.9" shape-rendering="crispEdges"/>
<line x1="505.0" y1="884.19" x2="509.5" y2="884.19" stroke="#333" stroke-width="0.9" shape-rendering="crispEdges"/>
<line x1="505.0" y1="882.35" x2="509.5" y2="882.35" stroke="#333" stroke-width="0.9" shape-rendering="crispEdges"/>
<line x1="505.0" y1="880.50" x2="509.5" y2="880.50" stroke="#333" stroke-width="0.9" shape-rendering="crispEdges"/>
<line x1="505.0" y1="878.65" x2="509.5" y2="878.65" stroke="#333" stroke-width="0.9" shape-rendering="crispEdges"/>
<line x1="501.0" y1="877.5" x2="509.5" y2="877.5" stroke="#333" stroke-width="1"/>
<text x="495.50" y="882.10" text-anchor="end" font-size="12" fill="#333333" textLength="11.38" lengthAdjust="spacing">0.</text>
<line x1="505.0" y1="874.95" x2="509.5" y2="874.95" stroke="#333" stroke-width="0.9" shape-rendering="crispEdges"/>
<line x1="505.0" y1="873.10" x2="509.5" y2="873.10" stroke="#333" stroke-width="0.9" shape-rendering="crispEdges"/>
<line x1="505.0" y1="871.25" x2="509.5" y2="871.25" stroke="#333" stroke-width="0.9" shape-rendering="crispEdges"/>
<line x1="505.0" y1="869.40" x2="509.5" y2="869.40" stroke="#333" stroke-width="0.9" shape-rendering="crispEdges"/>
<line x1="505.0" y1="867.56" x2="509.5" y2="867.56" stroke="#333" stroke-width="0.9" shape-rendering="crispEdges"/>
<line x1="505.0" y1="865.71" x2="509.5" y2="865.71" stroke="#333" stroke-width="0.9" shape-rendering="crispEdges"/>
<line x1="505.0" y1="863.86" x2="509.5" y2="863.86" stroke="#333" stroke-width="0.9" shape-rendering="crispEdges"/>
<line x1="505.0" y1="862.01" x2="509.5" y2="862.01" stroke="#333" stroke-width="0.9" shape-rendering="crispEdges"/>
<line x1="505.0" y1="860.16" x2="509.5" y2="860.16" stroke="#333" stroke-width="0.9" shape-rendering="crispEdges"/>
<line x1="501.0" y1="858.5" x2="509.5" y2="858.5" stroke="#333" stroke-width="1"/>
<text x="495.50" y="863.10" text-anchor="end" font-size="12" fill="#333333" textLength="18.96" lengthAdjust="spacing">10.</text>
<line x1="505.0" y1="856.46" x2="509.5" y2="856.46" stroke="#333" stroke-width="0.9" shape-rendering="crispEdges"/>
<line x1="505.0" y1="854.62" x2="509.5" y2="854.62" stroke="#333" stroke-width="0.9" shape-rendering="crispEdges"/>
<line x1="505.0" y1="852.77" x2="509.5" y2="852.77" stroke="#333" stroke-width="0.9" shape-rendering="crispEdges"/>
<line x1="505.0" y1="850.92" x2="509.5" y2="850.92" stroke="#333" stroke-width="0.9" shape-rendering="crispEdges"/>
<line x1="505.0" y1="849.07" x2="509.5" y2="849.07" stroke="#333" stroke-width="0.9" shape-rendering="crispEdges"/>
<line x1="505.0" y1="847.22" x2="509.5" y2="847.22" stroke="#333" stroke-width="0.9" shape-rendering="crispEdges"/>
<line x1="505.0" y1="845.37" x2="509.5" y2="845.37" stroke="#333" stroke-width="0.9" shape-rendering="crispEdges"/>
<line x1="505.0" y1="843.52" x2="509.5" y2="843.52" stroke="#333" stroke-width="0.9" shape-rendering="crispEdges"/>
<line x1="505.0" y1="841.67" x2="509.5" y2="841.67" stroke="#333" stroke-width="0.9" shape-rendering="crispEdges"/>
<line x1="501.0" y1="840.5" x2="509.5" y2="840.5" stroke="#333" stroke-width="1"/>
<text x="495.50" y="845.10" text-anchor="end" font-size="12" fill="#333333" textLength="18.96" lengthAdjust="spacing">20.</text>
<line x1="505.0" y1="837.98" x2="509.5" y2="837.98" stroke="#333" stroke-width="0.9" shape-rendering="crispEdges"/>
<line x1="505.0" y1="836.13" x2="509.5" y2="836.13" stroke="#333" stroke-width="0.9" shape-rendering="crispEdges"/>
<line x1="505.0" y1="834.28" x2="509.5" y2="834.28" stroke="#333" stroke-width="0.9" shape-rendering="crispEdges"/>
<line x1="505.0" y1="832.43" x2="509.5" y2="832.43" stroke="#333" stroke-width="0.9" shape-rendering="crispEdges"/>
<line x1="505.0" y1="830.58" x2="509.5" y2="830.58" stroke="#333" stroke-width="0.9" shape-rendering="crispEdges"/>
<line x1="505.0" y1="828.73" x2="509.5" y2="828.73" stroke="#333" stroke-width="0.9" shape-rendering="crispEdges"/>
<line x1="505.0" y1="826.88" x2="509.5" y2="826.88" stroke="#333" stroke-width="0.9" shape-rendering="crispEdges"/>
<line x1="505.0" y1="825.03" x2="509.5" y2="825.03" stroke="#333" stroke-width="0.9" shape-rendering="crispEdges"/>
<line x1="505.0" y1="823.19" x2="509.5" y2="823.19" stroke="#333" stroke-width="0.9" shape-rendering="crispEdges"/>
<line x1="501.0" y1="821.5" x2="509.5" y2="821.5" stroke="#333" stroke-width="1"/>
<text x="495.50" y="826.10" text-anchor="end" font-size="12" fill="#333333" textLength="18.96" lengthAdjust="spacing">30.</text>
<line x1="505.0" y1="819.49" x2="509.5" y2="819.49" stroke="#333" stroke-width="0.9" shape-rendering="crispEdges"/>
<line x1="505.0" y1="817.64" x2="509.5" y2="817.64" stroke="#333" stroke-width="0.9" shape-rendering="crispEdges"/>
<line x1="505.0" y1="815.79" x2="509.5" y2="815.79" stroke="#333" stroke-width="0.9" shape-rendering="crispEdges"/>
<line x1="505.0" y1="813.94" x2="509.5" y2="813.94" stroke="#333" stroke-width="0.9" shape-rendering="crispEdges"/>
<line x1="505.0" y1="812.09" x2="509.5" y2="812.09" stroke="#333" stroke-width="0.9" shape-rendering="crispEdges"/>
<line x1="505.0" y1="810.25" x2="509.5" y2="810.25" stroke="#333" stroke-width="0.9" shape-rendering="crispEdges"/>
<line x1="505.0" y1="808.40" x2="509.5" y2="808.40" stroke="#333" stroke-width="0.9" shape-rendering="crispEdges"/>
<line x1="505.0" y1="806.55" x2="509.5" y2="806.55" stroke="#333" stroke-width="0.9" shape-rendering="crispEdges"/>
<line x1="505.0" y1="804.70" x2="509.5" y2="804.70" stroke="#333" stroke-width="0.9" shape-rendering="crispEdges"/>
<line x1="501.0" y1="803.5" x2="509.5" y2="803.5" stroke="#333" stroke-width="1"/>
<text x="495.50" y="808.10" text-anchor="end" font-size="12" fill="#333333" textLength="18.96" lengthAdjust="spacing">40.</text>
<line x1="660.5" y1="950.5" x2="660.5" y2="959.5" stroke="#333" stroke-width="1"/>
<text x="661.00" y="973.30" text-anchor="middle" font-size="12" fill="#333333" textLength="26.54" lengthAdjust="spacing">−40.</text>
<line x1="641.5" y1="950.5" x2="641.5" y2="955.3" stroke="#333" stroke-width="1"/>
<line x1="623.5" y1="950.5" x2="623.5" y2="959.5" stroke="#333" stroke-width="1"/>
<text x="624.00" y="973.30" text-anchor="middle" font-size="12" fill="#333333" textLength="26.54" lengthAdjust="spacing">−20.</text>
<line x1="604.5" y1="950.5" x2="604.5" y2="955.3" stroke="#333" stroke-width="1"/>
<line x1="585.5" y1="950.5" x2="585.5" y2="959.5" stroke="#333" stroke-width="1"/>
<text x="586.00" y="973.30" text-anchor="middle" font-size="12" fill="#333333" textLength="11.38" lengthAdjust="spacing">0.</text>
<line x1="566.5" y1="950.5" x2="566.5" y2="955.3" stroke="#333" stroke-width="1"/>
<line x1="548.5" y1="950.5" x2="548.5" y2="959.5" stroke="#333" stroke-width="1"/>
<text x="549.00" y="973.30" text-anchor="middle" font-size="12" fill="#333333" textLength="18.96" lengthAdjust="spacing">20.</text>
<line x1="529.5" y1="950.5" x2="529.5" y2="955.3" stroke="#333" stroke-width="1"/>
<line x1="510.5" y1="950.5" x2="510.5" y2="959.5" stroke="#333" stroke-width="1"/>
<text x="511.00" y="973.30" text-anchor="middle" font-size="12" fill="#333333" textLength="18.96" lengthAdjust="spacing">40.</text>
<text x="584.30" y="992.00" text-anchor="middle" font-size="12" fill="#333333" textLength="37.50" lengthAdjust="spacingAndGlyphs">KSM−X</text>
<text x="461.00" y="877.00" text-anchor="middle" font-size="12" fill="#333333" textLength="37.00" lengthAdjust="spacingAndGlyphs" transform="rotate(-90 461.00 877.00)">KSM−Z</text>
<clipPath id="c3"><rect x="803.5" y="802.5" width="151.0" height="148.0"/></clipPath>
<ellipse cx="879.2" cy="876.6" rx="67.3" ry="65.9" fill="none" stroke="#1a2cf0" stroke-width="1.1" stroke-dasharray="2.2 1.2"/>
<ellipse cx="879.2" cy="876.6" rx="44.6" ry="44.1" fill="none" stroke="#7a4b22" stroke-width="1.1" stroke-dasharray="2.2 1.2"/>
<ellipse cx="880" cy="876.6" rx="21.6" ry="7.3" fill="none" stroke="#000" stroke-width="1.5"/>
<path d="M879.7 874.6 L881.2 876.6 L879.7 878.6 L878.2 876.6 Z" fill="none" stroke="#000" stroke-width="0.9"/>
<circle cx="879.8" cy="884.3" r="2.7" fill="#ff0000"/>
<path d="M835.70 837.90 C836.42 838.17 838.37 838.77 840.00 839.50 C841.63 840.23 844.58 841.83 845.50 842.30" fill="none" stroke="#000" stroke-width="1.5"/>
<ellipse cx="835.7" cy="837.9" rx="3.2" ry="2.8" fill="#0000ff"/>
<path d="M831.20 833.40 L840.20 842.40" fill="none" stroke="#ff2020" stroke-width="1.2"/>
<path d="M831.20 842.40 L840.20 833.40" fill="none" stroke="#ff2020" stroke-width="1.2"/>
<rect x="803.5" y="802.5" width="151.0" height="148.0" fill="none" stroke="#333" stroke-width="1"/>
<line x1="799.0" y1="950.5" x2="803.5" y2="950.5" stroke="#333" stroke-width="1"/>
<line x1="795.5" y1="940.5" x2="803.5" y2="940.5" stroke="#333" stroke-width="1"/>
<text x="790.00" y="944.80" text-anchor="end" font-size="12" fill="#333333" textLength="26.54" lengthAdjust="spacing">−60.</text>
<line x1="799.0" y1="929.5" x2="803.5" y2="929.5" stroke="#333" stroke-width="1"/>
<line x1="795.5" y1="919.5" x2="803.5" y2="919.5" stroke="#333" stroke-width="1"/>
<text x="790.00" y="923.80" text-anchor="end" font-size="12" fill="#333333" textLength="26.54" lengthAdjust="spacing">−40.</text>
<line x1="799.0" y1="908.5" x2="803.5" y2="908.5" stroke="#333" stroke-width="1"/>
<line x1="795.5" y1="898.5" x2="803.5" y2="898.5" stroke="#333" stroke-width="1"/>
<text x="790.00" y="902.80" text-anchor="end" font-size="12" fill="#333333" textLength="26.54" lengthAdjust="spacing">−20.</text>
<line x1="799.0" y1="887.5" x2="803.5" y2="887.5" stroke="#333" stroke-width="1"/>
<line x1="795.5" y1="877.5" x2="803.5" y2="877.5" stroke="#333" stroke-width="1"/>
<text x="790.00" y="881.80" text-anchor="end" font-size="12" fill="#333333" textLength="11.38" lengthAdjust="spacing">0.</text>
<line x1="799.0" y1="866.5" x2="803.5" y2="866.5" stroke="#333" stroke-width="1"/>
<line x1="795.5" y1="856.5" x2="803.5" y2="856.5" stroke="#333" stroke-width="1"/>
<text x="790.00" y="860.80" text-anchor="end" font-size="12" fill="#333333" textLength="18.96" lengthAdjust="spacing">20.</text>
<line x1="799.0" y1="845.5" x2="803.5" y2="845.5" stroke="#333" stroke-width="1"/>
<line x1="795.5" y1="835.5" x2="803.5" y2="835.5" stroke="#333" stroke-width="1"/>
<text x="790.00" y="839.80" text-anchor="end" font-size="12" fill="#333333" textLength="18.96" lengthAdjust="spacing">40.</text>
<line x1="799.0" y1="824.5" x2="803.5" y2="824.5" stroke="#333" stroke-width="1"/>
<line x1="795.5" y1="814.5" x2="803.5" y2="814.5" stroke="#333" stroke-width="1"/>
<text x="790.00" y="818.80" text-anchor="end" font-size="12" fill="#333333" textLength="18.96" lengthAdjust="spacing">60.</text>
<line x1="799.0" y1="803.5" x2="803.5" y2="803.5" stroke="#333" stroke-width="1"/>
<line x1="805.5" y1="950.5" x2="805.5" y2="955.5" stroke="#333" stroke-width="1"/>
<line x1="815.5" y1="950.5" x2="815.5" y2="955.5" stroke="#333" stroke-width="1"/>
<line x1="826.5" y1="950.5" x2="826.5" y2="959.0" stroke="#333" stroke-width="1"/>
<text x="827.00" y="973.50" text-anchor="middle" font-size="12" fill="#333333" textLength="26.54" lengthAdjust="spacing">−50.</text>
<line x1="837.5" y1="950.5" x2="837.5" y2="955.5" stroke="#333" stroke-width="1"/>
<line x1="847.5" y1="950.5" x2="847.5" y2="955.5" stroke="#333" stroke-width="1"/>
<line x1="858.5" y1="950.5" x2="858.5" y2="955.5" stroke="#333" stroke-width="1"/>
<line x1="869.5" y1="950.5" x2="869.5" y2="955.5" stroke="#333" stroke-width="1"/>
<line x1="879.5" y1="950.5" x2="879.5" y2="959.0" stroke="#333" stroke-width="1"/>
<text x="880.00" y="973.50" text-anchor="middle" font-size="12" fill="#333333" textLength="11.38" lengthAdjust="spacing">0.</text>
<line x1="890.5" y1="950.5" x2="890.5" y2="955.5" stroke="#333" stroke-width="1"/>
<line x1="901.5" y1="950.5" x2="901.5" y2="955.5" stroke="#333" stroke-width="1"/>
<line x1="911.5" y1="950.5" x2="911.5" y2="955.5" stroke="#333" stroke-width="1"/>
<line x1="922.5" y1="950.5" x2="922.5" y2="955.5" stroke="#333" stroke-width="1"/>
<line x1="933.5" y1="950.5" x2="933.5" y2="959.0" stroke="#333" stroke-width="1"/>
<text x="934.00" y="973.50" text-anchor="middle" font-size="12" fill="#333333" textLength="18.96" lengthAdjust="spacing">50.</text>
<line x1="943.5" y1="950.5" x2="943.5" y2="955.5" stroke="#333" stroke-width="1"/>
<line x1="954.5" y1="950.5" x2="954.5" y2="955.5" stroke="#333" stroke-width="1"/>
<text x="879.00" y="992.00" text-anchor="middle" font-size="12" fill="#333333" textLength="37.50" lengthAdjust="spacingAndGlyphs">KSM−Y</text>
<text x="755.50" y="877.00" text-anchor="middle" font-size="12" fill="#333333" textLength="37.00" lengthAdjust="spacingAndGlyphs" transform="rotate(-90 755.50 877.00)">KSM−Z</text>
</g>
</svg>
</body></html>
